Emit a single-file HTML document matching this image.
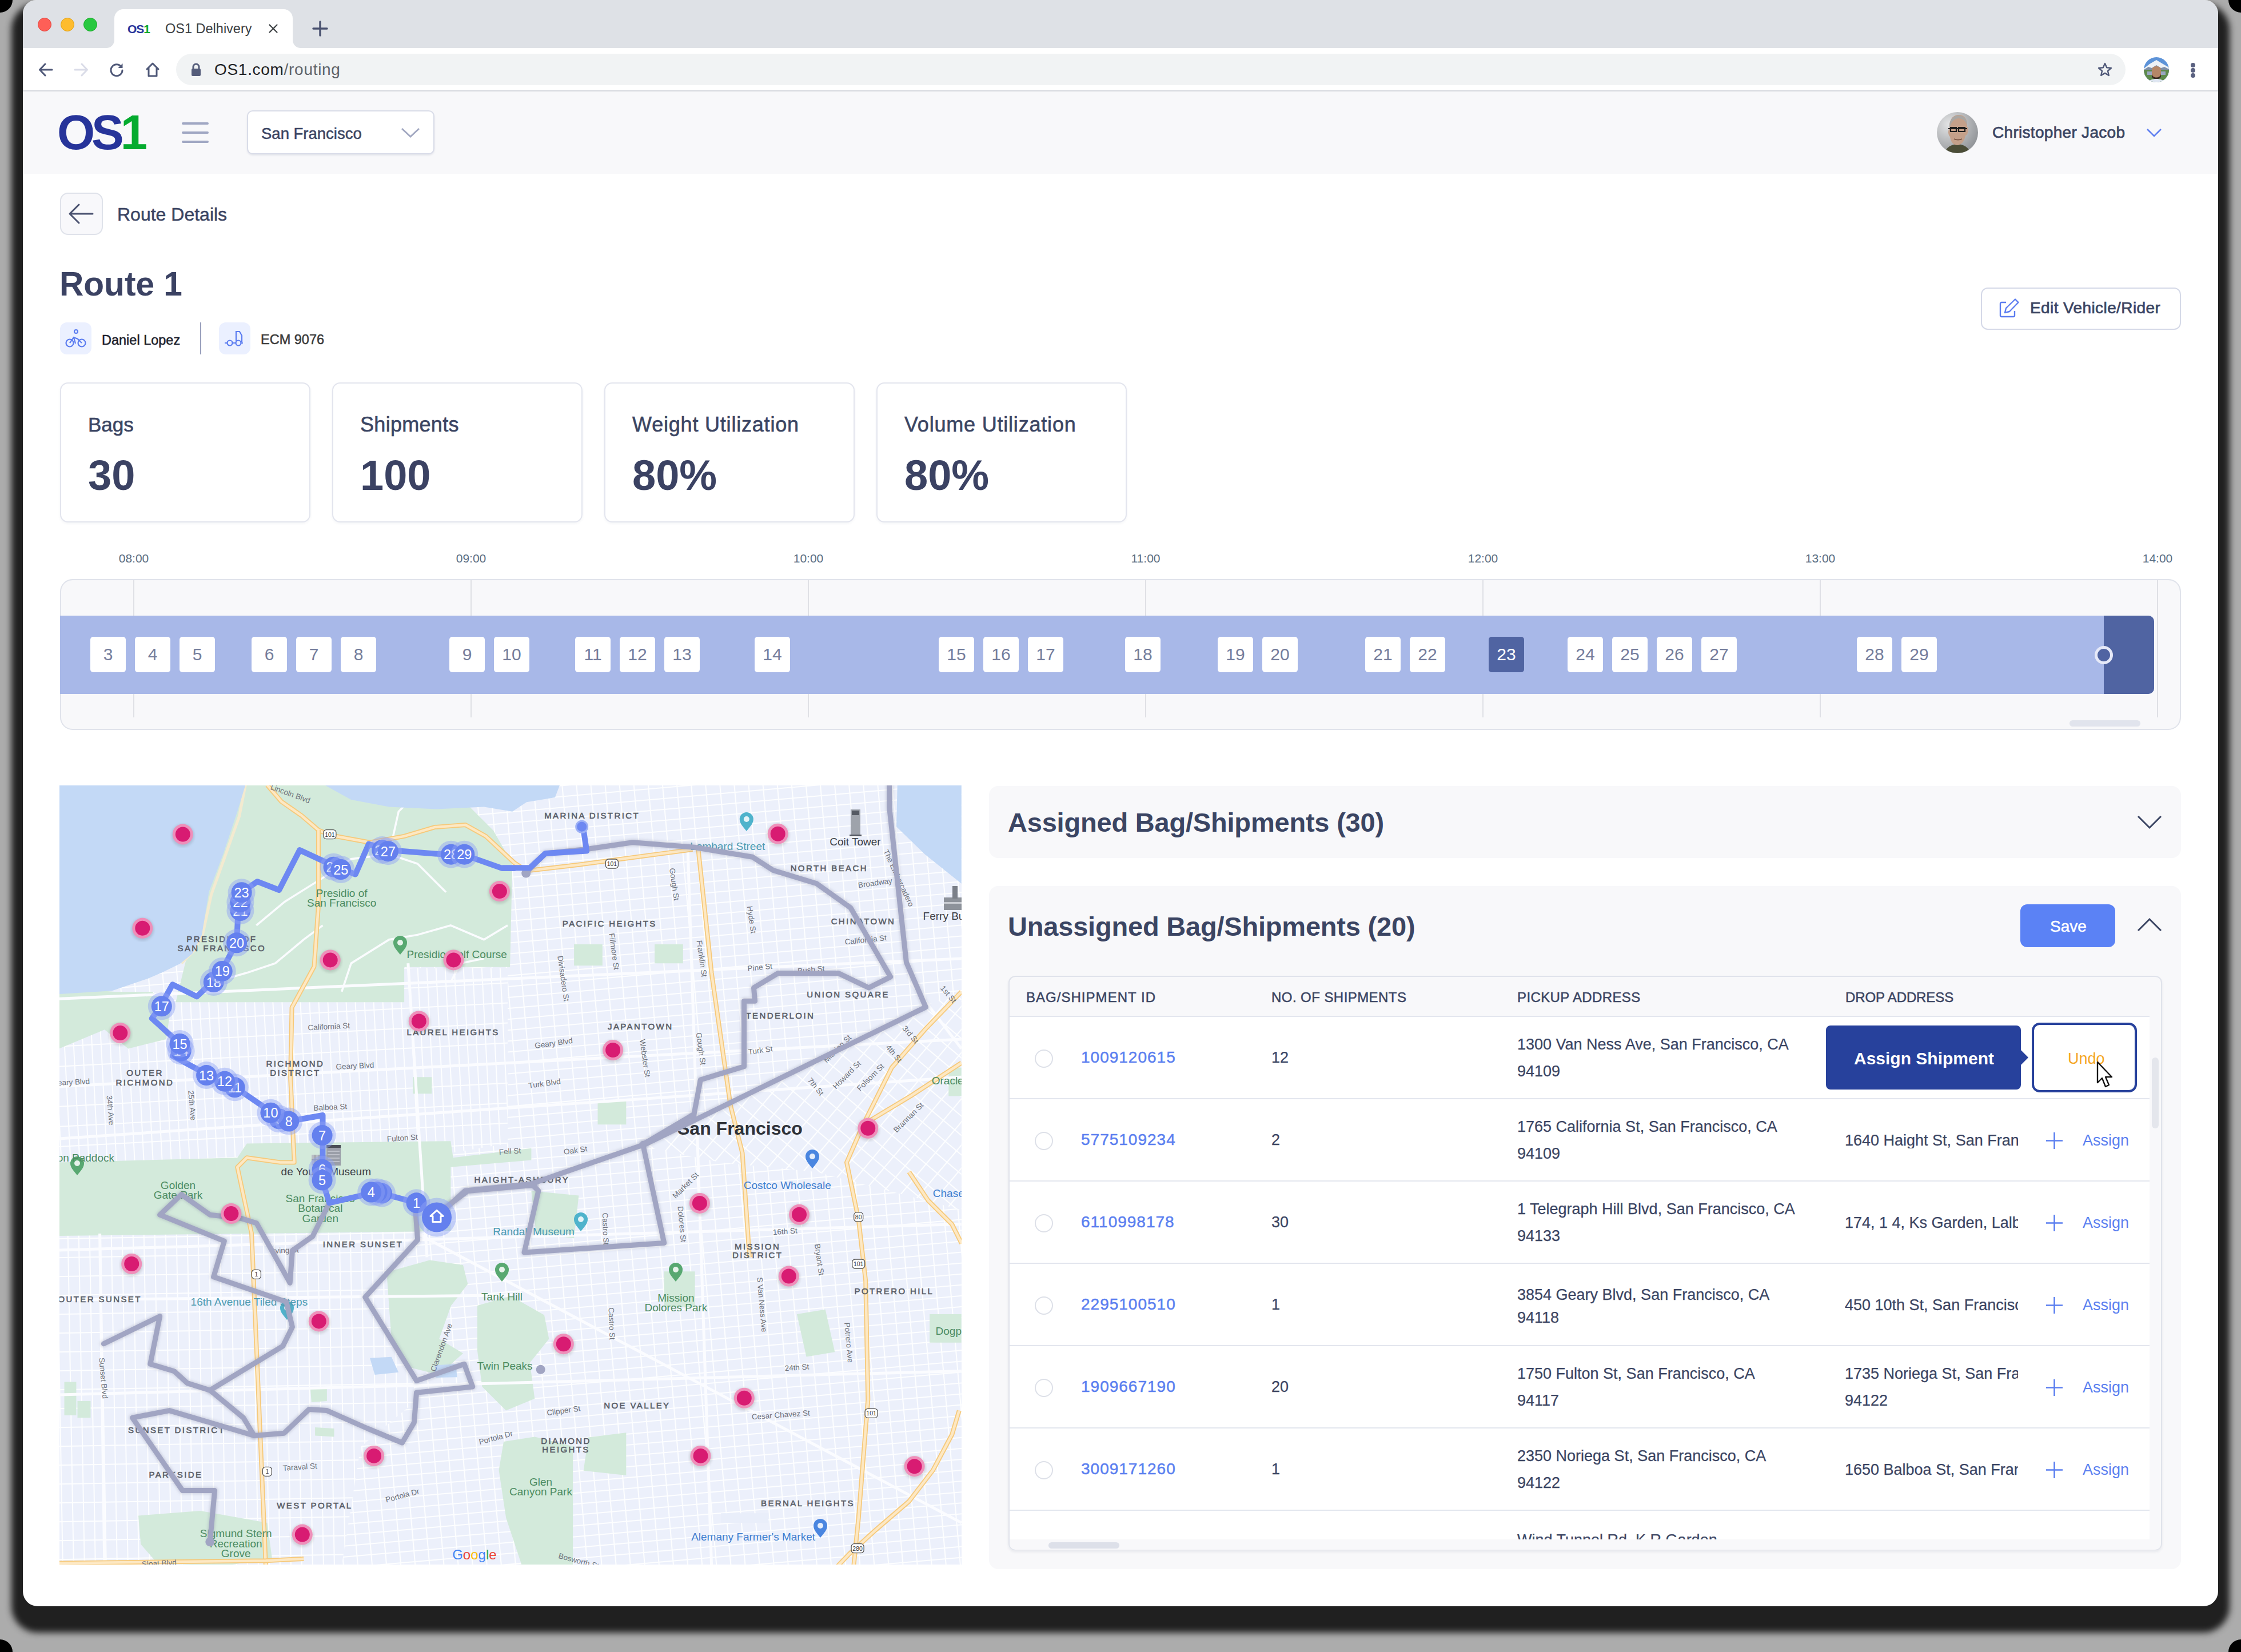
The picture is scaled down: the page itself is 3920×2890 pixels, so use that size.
<!DOCTYPE html>
<html><head><meta charset="utf-8">
<style>
*{box-sizing:border-box;margin:0;padding:0}
html,body{width:3920px;height:2890px;overflow:hidden}
body{position:relative;font-family:"Liberation Sans",sans-serif;background:#acacac;color:#3b4563}
.a{position:absolute}
#shadow{position:absolute;left:40px;top:0;width:3840px;height:2810px;border-radius:26px;background:#111;box-shadow:0 26px 12px 20px #202020}
#win{position:absolute;left:0;top:0;width:3920px;height:2890px;clip-path:inset(0 40px 80px 40px round 24px 24px 26px 26px);background:#fff}
.t{position:absolute;white-space:nowrap;line-height:1}
.m{-webkit-text-stroke:0.5px currentColor}
.card{position:absolute;top:669px;width:438px;height:245px;border:2px solid #e3e5ee;border-radius:14px;background:#fff;box-shadow:0 2px 4px rgba(40,50,90,.05)}
.card .l{-webkit-text-stroke:0.6px currentColor;position:absolute;left:47px;top:52px;font-size:35px;color:#3b4563;white-space:nowrap}
.card .v{position:absolute;left:47px;top:118px;font-size:74px;font-weight:bold;color:#3b4263;white-space:nowrap}
.tl{position:absolute;top:965px;font-size:21px;color:#5b6e82;width:80px;text-align:center;margin-left:-40px}
.gl{position:absolute;top:1015px;width:2px;height:240px;background:#dfe0e5}
.bx{position:absolute;top:1114px;width:62px;height:62px;background:#fff;border-radius:5px;font-size:30px;color:#747d9c;text-align:center;line-height:62px}
.row{position:absolute;left:1766px;width:1994px;height:144px;border-top:2px solid #e3e6ee;background:#fff}
.radio{position:absolute;left:44px;top:57px;width:32px;height:32px;border:2px solid #dde0e8;border-radius:50%}
.rid{-webkit-text-stroke:0.5px currentColor;position:absolute;left:125px;top:57px;font-size:28px;letter-spacing:1px;color:#5b7ff0;white-space:nowrap;line-height:1}
.cnt{-webkit-text-stroke:0.25px currentColor;position:absolute;left:458px;top:58px;font-size:27px;color:#3b4563;white-space:nowrap;line-height:1}
.pa{-webkit-text-stroke:0.25px currentColor;position:absolute;left:888px;top:25px;font-size:27px;color:#3b4563;white-space:nowrap;line-height:47px}
.da{-webkit-text-stroke:0.25px currentColor;position:absolute;left:1461px;top:59px;width:303px;overflow:hidden;font-size:27px;color:#3b4563;white-space:nowrap;line-height:1}
.plus{position:absolute;left:1812px;top:57px;width:31px;height:31px}
.asg{position:absolute;left:1877px;top:59px;font-size:27px;color:#5b7ff0;white-space:nowrap;line-height:1}
</style></head><body>
<div class="a" style="left:-22px;top:-22px;width:44px;height:44px;border-radius:50%;background:#000"></div>
<div class="a" style="left:3898px;top:-22px;width:44px;height:44px;border-radius:50%;background:#000"></div>
<div class="a" style="left:-22px;top:2868px;width:44px;height:44px;border-radius:50%;background:#000"></div>
<div class="a" style="left:3898px;top:2868px;width:44px;height:44px;border-radius:50%;background:#000"></div>
<div id="shadow"></div>
<div id="win">
  <!-- title bar -->
  <div class="a" style="left:0;top:0;width:3920px;height:84px;background:#dee1e6"></div>
  <div class="a" style="left:66px;top:31px;width:24px;height:24px;border-radius:50%;background:#fe5f57;border:1px solid #e2463f"></div>
  <div class="a" style="left:106px;top:31px;width:24px;height:24px;border-radius:50%;background:#febc2e;border:1px solid #e1a116"></div>
  <div class="a" style="left:146px;top:31px;width:24px;height:24px;border-radius:50%;background:#28c840;border:1px solid #1aab29"></div>
  <!-- tab -->
  <div class="a" style="left:200px;top:16px;width:312px;height:70px;background:#fff;border-radius:16px 16px 0 0"></div>
  <svg class="a" style="left:186px;top:70px" width="14" height="14"><path d="M0 14 A14 14 0 0 0 14 0 L14 14 Z" fill="#fff"/></svg>
  <svg class="a" style="left:512px;top:70px" width="14" height="14"><path d="M14 14 A14 14 0 0 1 0 0 L0 14 Z" fill="#fff"/></svg>
  <div class="t" style="left:223px;top:40px;font-size:21px;font-weight:bold;letter-spacing:-1px;color:#27349a">OS<span style="color:#05ab2f">1</span></div>
  <div class="t" style="left:289px;top:39px;font-size:23.5px;color:#3c4043">OS1 Delhivery</div>
  <svg class="a" style="left:468px;top:40px" width="20" height="20"><path d="M3.5 3.5L16.5 16.5M16.5 3.5L3.5 16.5" stroke="#3c4043" stroke-width="2.2" stroke-linecap="round"/></svg>
  <svg class="a" style="left:545px;top:35px" width="30" height="30"><path d="M15 3V27M3 15H27" stroke="#4a5270" stroke-width="3.4" stroke-linecap="round"/></svg>
  <!-- address bar -->
  <div class="a" style="left:0;top:84px;width:3920px;height:75px;background:#fff"></div>
  <div class="a" style="left:0;top:158px;width:3920px;height:2px;background:#d6d8de"></div>
  <svg class="a" style="left:66px;top:108px" width="28" height="28"><path d="M25 14H4M13 4L3.5 14L13 24" fill="none" stroke="#4f5878" stroke-width="3" stroke-linecap="round" stroke-linejoin="round"/></svg>
  <svg class="a" style="left:128px;top:108px" width="28" height="28"><path d="M3 14H24M15 4L24.5 14L15 24" fill="none" stroke="#dadce8" stroke-width="3" stroke-linecap="round" stroke-linejoin="round"/></svg>
  <svg class="a" style="left:190px;top:108px" width="28" height="28"><path d="M22.5 9.5A10 10 0 1 0 24 15" fill="none" stroke="#4f5878" stroke-width="3" stroke-linecap="round"/><path d="M24.5 3V11H16.5Z" fill="#4f5878"/></svg>
  <svg class="a" style="left:252px;top:107px" width="30" height="30"><path d="M5 14L15 4L25 14M8 12V26H22V12" fill="none" stroke="#4f5878" stroke-width="3" stroke-linejoin="round" stroke-linecap="round"/></svg>
  <div class="a" style="left:308px;top:94px;width:3410px;height:55px;border-radius:28px;background:#f1f3f4"></div>
  <svg class="a" style="left:333px;top:109px" width="20" height="26"><path d="M5 11V8A5 5 0 0 1 15 8V11" fill="none" stroke="#545c7a" stroke-width="3"/><rect x="2" y="11" width="16" height="13" rx="2" fill="#545c7a"/></svg>
  <div class="t" style="left:375px;top:108px;font-size:28px;letter-spacing:0.7px;color:#202124">OS1.com<span style="color:#5f6368">/routing</span></div>
  <svg class="a" style="left:3668px;top:108px" width="28" height="28"><path d="M14 3L17.2 10.3L25 11L19 16.2L20.8 24L14 19.9L7.2 24L9 16.2L3 11L10.8 10.3Z" fill="none" stroke="#4f5878" stroke-width="2.4" stroke-linejoin="round"/></svg>
  <svg class="a" style="left:3750px;top:100px" width="44" height="44" viewBox="0 0 44 44"><defs><clipPath id="pfc"><circle cx="22" cy="22" r="22"/></clipPath></defs><g clip-path="url(#pfc)"><rect width="44" height="44" fill="#5d93d8"/><path d="M0 20L10 12L22 5L32 11L44 18V44H0Z" fill="#eef2f7"/><path d="M0 22L8 17L14 19L22 14L30 19L36 17L44 21V44H0Z" fill="#7f8fa8"/><rect y="22" width="44" height="22" fill="#5e8a4c"/><rect x="6" y="25" width="32" height="6" fill="#9aa6c2"/><path d="M14 22C14 14 30 14 30 22V32C30 38 14 38 14 32Z" fill="#b58667"/><path d="M14 28C14 38 30 38 30 28V34C28 40 16 40 14 34Z" fill="#3a2a22"/><path d="M8 44C10 36 34 36 36 44Z" fill="#dfe6f2"/></g></svg>
  <div class="a" style="left:3832px;top:110px;width:8px;height:8px;border-radius:50%;background:#5a6180"></div>
  <div class="a" style="left:3832px;top:119px;width:8px;height:8px;border-radius:50%;background:#5a6180"></div>
  <div class="a" style="left:3832px;top:128px;width:8px;height:8px;border-radius:50%;background:#5a6180"></div>

  <!-- app header -->
  <div class="a" style="left:0;top:160px;width:3920px;height:144px;background:#f8f8fa"></div>
  <div class="t" style="left:100px;top:189px;font-size:85px;font-weight:bold;letter-spacing:-6px;color:#27349a">OS<span style="color:#05ab2f">1</span></div>
  <div class="a" style="left:318px;top:214px;width:47px;height:4px;border-radius:2px;background:#a0a7c3"></div>
  <div class="a" style="left:318px;top:230px;width:47px;height:4px;border-radius:2px;background:#a0a7c3"></div>
  <div class="a" style="left:318px;top:246px;width:47px;height:4px;border-radius:2px;background:#a0a7c3"></div>
  <div class="a" style="left:432px;top:193px;width:328px;height:77px;border:2px solid #d9dce8;border-radius:10px;background:#fff;box-shadow:0 2px 3px rgba(60,70,110,.1)"></div>
  <div class="t m" style="left:457px;top:220px;font-size:27.5px;color:#3b4563">San Francisco</div>
  <svg class="a" style="left:700px;top:222px" width="36" height="20"><path d="M3 3L18 17L33 3" fill="none" stroke="#a3a9c2" stroke-width="3"/></svg>
  <svg class="a" style="left:3388px;top:196px" width="72" height="72" viewBox="0 0 72 72"><defs><radialGradient id="avbg" cx="30%" cy="30%" r="80%"><stop offset="0" stop-color="#e4e5e6"/><stop offset="1" stop-color="#8f9296"/></radialGradient><clipPath id="avc"><circle cx="36" cy="36" r="36"/></clipPath></defs><g clip-path="url(#avc)"><rect width="72" height="72" fill="url(#avbg)"/><path d="M14 72C16 62 24 57 36 56C48 57 56 62 58 72Z" fill="#4b4d37"/><path d="M22 30C21 12 29 5 38 5C48 5 54 12 53 26C55 27 56 31 54 36C53 40 51 41 50 41C48 52 42 58 36 58C29 58 24 52 23 43C21 42 20 38 20 35C20 32 21 30 22 30Z" fill="#c4a08a"/><path d="M22 28C21 14 28 6 38 6C47 6 53 12 53 24C51 17 48 12 38 11C30 12 25 17 22 28Z" fill="#a9a7a4"/><path d="M20 29H53M24 27H34V34H24ZM38 27H49V34H38Z" fill="none" stroke="#1e1e1e" stroke-width="2.2"/><path d="M30 47C34 49 40 49 44 47" stroke="#7a5444" stroke-width="1.8" fill="none"/></g></svg>
  <div class="t" style="left:3485px;top:218px;font-size:28px;letter-spacing:0.3px;-webkit-text-stroke:0.7px #3b4563;color:#3b4563">Christopher Jacob</div>
  <svg class="a" style="left:3754px;top:222px" width="28" height="20"><path d="M2 4L14 16L26 4" fill="none" stroke="#5b7cf0" stroke-width="2.6"/></svg>

  <!-- route details -->
  <div class="a" style="left:105px;top:337px;width:75px;height:74px;border:2px solid #dfe2ea;border-radius:14px;background:#f8f8fb"></div>
  <svg class="a" style="left:118px;top:354px" width="48" height="40"><path d="M44 20H5M20 4L4 20L20 36" fill="none" stroke="#4a5270" stroke-width="3" stroke-linecap="round" stroke-linejoin="round"/></svg>
  <div class="t m" style="left:205px;top:359px;font-size:32px;color:#3b4563">Route Details</div>
  <div class="t" style="left:104px;top:468px;font-size:58.6px;font-weight:bold;color:#3b4263">Route 1</div>
  <div class="a" style="left:105px;top:564px;width:55px;height:56px;border-radius:12px;background:#ebf0ff"></div>
  <svg class="a" style="left:112px;top:574px" width="42" height="36"><g fill="none" stroke="#5b7cf0" stroke-width="2.2"><circle cx="10" cy="26" r="6.5"/><circle cx="31" cy="26" r="6.5"/><circle cx="21" cy="6" r="3"/><path d="M10 26L17 16L24 19L31 26M17 16L20 27"/></g></svg>
  <div class="t m" style="left:178px;top:584px;font-size:23.5px;color:#1b1d2b">Daniel Lopez</div>
  <div class="a" style="left:350px;top:564px;width:2px;height:56px;background:#9aa0bd"></div>
  <div class="a" style="left:383px;top:564px;width:55px;height:56px;border-radius:12px;background:#ebf0ff"></div>
  <svg class="a" style="left:392px;top:578px" width="40" height="30"><g fill="none" stroke="#5b7cf0" stroke-width="2.2"><circle cx="10" cy="22" r="4.5"/><circle cx="25" cy="22" r="4.5"/><path d="M1 22H5.5M14.5 22H20.5M29.5 22H33M21 18V2H27L31 9V20"/></g></svg>
  <div class="t m" style="left:456px;top:583px;font-size:23.5px;color:#3a3a3a">ECM 9076</div>

  <div class="a" style="left:3465px;top:503px;width:350px;height:74px;border:2px solid #d5d9e8;border-radius:12px;background:#fff"></div>
  <svg class="a" style="left:3494px;top:520px" width="40" height="40"><g fill="none" stroke="#5b7cf0" stroke-width="2.4" stroke-linejoin="round"><path d="M15 9H7A2 2 0 0 0 5 11V32A2 2 0 0 0 7 34H28A2 2 0 0 0 30 32V24"/><path d="M13 27L15 19L31 3.5L36.5 9L21 25Z"/></g></svg>
  <div class="t" style="left:3551px;top:525px;font-size:28px;letter-spacing:0.4px;-webkit-text-stroke:0.7px #3b4563;color:#3b4563">Edit Vehicle/Rider</div>

  <!-- cards -->
  <div class="card" style="left:105px"><div class="l">Bags</div><div class="v">30</div></div>
  <div class="card" style="left:581px"><div class="l" style="font-size:36px;top:51px;letter-spacing:0.3px">Shipments</div><div class="v">100</div></div>
  <div class="card" style="left:1057px"><div class="l" style="font-size:36px;top:51px;letter-spacing:0.8px">Weight Utilization</div><div class="v">80%</div></div>
  <div class="card" style="left:1533px"><div class="l" style="font-size:36px;top:51px;letter-spacing:0.8px">Volume Utilization</div><div class="v">80%</div></div>

  <!-- timeline -->
  <div class="tl" style="left:234px">08:00</div>
  <div class="tl" style="left:824px">09:00</div>
  <div class="tl" style="left:1414px">10:00</div>
  <div class="tl" style="left:2004px">11:00</div>
  <div class="tl" style="left:2594px">12:00</div>
  <div class="tl" style="left:3184px">13:00</div>
  <div class="tl" style="left:3774px">14:00</div>
  <div class="a" style="left:105px;top:1013px;width:3710px;height:264px;border:2px solid #e0e3eb;border-radius:22px;background:#f8f8fa;overflow:hidden">
  </div>
  <div class="gl" style="left:233px"></div><div class="gl" style="left:823px"></div><div class="gl" style="left:1413px"></div><div class="gl" style="left:2003px"></div><div class="gl" style="left:2593px"></div><div class="gl" style="left:3183px"></div><div class="gl" style="left:3773px"></div>
  <div class="a" style="left:105px;top:1077px;width:3663px;height:137px;background:#a8b8e8;border-radius:0 10px 10px 0"></div>
  <div class="a" style="left:3680px;top:1077px;width:88px;height:137px;background:#5064a2;border-radius:0 10px 10px 0"></div>
  <div class="a" style="left:3664px;top:1130px;width:32px;height:32px;border-radius:50%;background:#5064a2;border:5px solid #e6e9f8"></div>
  <div class="a" style="left:3620px;top:1260px;width:124px;height:11px;border-radius:6px;background:#e1e4ed"></div>
  <div class="bx" style="left:158px">3</div><div class="bx" style="left:236px">4</div><div class="bx" style="left:314px">5</div>
  <div class="bx" style="left:440px">6</div><div class="bx" style="left:518px">7</div><div class="bx" style="left:596px">8</div>
  <div class="bx" style="left:786px">9</div><div class="bx" style="left:864px">10</div>
  <div class="bx" style="left:1006px">11</div><div class="bx" style="left:1084px">12</div><div class="bx" style="left:1162px">13</div>
  <div class="bx" style="left:1320px">14</div>
  <div class="bx" style="left:1642px">15</div><div class="bx" style="left:1720px">16</div><div class="bx" style="left:1798px">17</div>
  <div class="bx" style="left:1968px">18</div>
  <div class="bx" style="left:2130px">19</div><div class="bx" style="left:2208px">20</div>
  <div class="bx" style="left:2388px">21</div><div class="bx" style="left:2466px">22</div>
  <div class="bx" style="left:2604px;background:#5064a2;color:#fff">23</div>
  <div class="bx" style="left:2742px">24</div><div class="bx" style="left:2820px">25</div><div class="bx" style="left:2898px">26</div><div class="bx" style="left:2976px">27</div>
  <div class="bx" style="left:3248px">28</div><div class="bx" style="left:3326px">29</div>

  <!-- MAP -->
  <div id="map" class="a" style="left:104px;top:1374px;width:1578px;height:1363px;background:#e9eef8;overflow:hidden">
<svg width="1578" height="1363" viewBox="0 0 1578 1363" style="position:absolute;left:0;top:0">
<defs>
<pattern id="g1" width="25" height="19" patternUnits="userSpaceOnUse" patternTransform="rotate(-5)"><rect width="25" height="19" fill="#ecf0fb"/><path d="M0 1H25M1 0V19" stroke="#fdfeff" stroke-width="2.2"/></pattern>
<pattern id="g2" width="16" height="35" patternUnits="userSpaceOnUse" patternTransform="rotate(-3)"><rect width="16" height="35" fill="#ecf0fb"/><path d="M0 1H16M1 0V35" stroke="#fdfeff" stroke-width="2"/></pattern>
<pattern id="g3" width="26" height="26" patternUnits="userSpaceOnUse" patternTransform="rotate(40)"><rect width="26" height="26" fill="#ecf0fb"/><path d="M0 1H26M1 0V26" stroke="#fdfeff" stroke-width="2.2"/></pattern>
<pattern id="g4" width="19" height="33" patternUnits="userSpaceOnUse" patternTransform="rotate(-1)"><rect width="19" height="33" fill="#ecf0fb"/><path d="M0 1H19M1 0V33" stroke="#fdfeff" stroke-width="2"/></pattern>
<filter id="sh" x="-5%" y="-5%" width="110%" height="110%"><feGaussianBlur stdDeviation="2"/></filter>
</defs>
<rect width="1578" height="1363" fill="url(#g1)"/>
<path d="M-0.7 360.9 L593.2 360.9 L593.2 319.5 L784.0 319.5 L784.0 626.4 L684.4 642.9 L-0.7 659.5Z" fill="url(#g2)"/>
<path d="M-0.7 775.7 L626.4 775.7 L576.6 908.4 L626.4 1074.2 L526.8 1157.2 L493.7 1364.5 L-0.7 1364.5Z" fill="url(#g4)"/>
<path d="M1016.2 630.5 L1513.8 385.8 L1577.7 360.9 L1577.7 742.5 L1323.1 676.1 L1157.2 659.5Z" fill="url(#g3)"/>
<path d="M244.8 -0.7 L576.6 -0.7 L709.3 29.2 L759.1 78.9 L792.2 137.0 L788.1 317.8 L603.1 317.8 L603.1 379.2 L203.4 379.2 L219.9 311.2 L244.8 236.5 L286.3 112.1 L315.3 29.2Z" fill="#d3eadb"/>
<path d="M-0.7 352.7 L95.5 360.9 L161.9 360.9 L195.1 385.8 L186.8 443.9 L120.4 460.5 L78.9 427.3 L-0.7 460.5Z" fill="#d3eadb"/>
<path d="M-0.7 659.5 L311.2 651.2 L327.8 626.4 L684.4 622.2 L688.6 651.2 L825.4 634.7 L825.4 655.4 L684.4 667.8 L684.4 779.8 L-0.7 788.1Z" fill="#d3eadb"/>
<path d="M572.3 851.4 L647.5 830.5 L706.0 838.9 L714.3 872.3 L685.1 909.9 L664.2 968.3 L706.0 993.4 L664.2 1031.0 L614.1 1018.5 L580.7 968.3 L576.5 909.9Z" fill="#d3eadb"/>
<path d="M731.0 909.9 L789.5 893.2 L848.0 926.6 L856.3 968.3 L822.9 1010.1 L831.3 1072.8 L781.2 1093.6 L739.4 1051.9 L731.0 989.2Z" fill="#d3eadb"/>
<path d="M777.0 1147.9 L831.3 1139.6 L898.1 1156.3 L898.1 1369.3 L810.4 1369.3 L781.2 1281.6 L768.6 1198.1Z" fill="#d3eadb"/>
<path d="M138.0 1277.4 L246.6 1269.1 L363.5 1289.9 L371.9 1352.6 L288.3 1365.1 L171.4 1360.9 L142.2 1327.5Z" fill="#d3eadb"/>
<path d="M438.7 1051.9 L467.9 1056.1 L467.9 1076.9 L440.8 1079.0Z" fill="#d3eadb"/>
<path d="M447.1 1122.9 L480.5 1125.0 L480.5 1139.6 L447.1 1137.5Z" fill="#d3eadb"/>
<path d="M8.5 1043.5 L29.4 1043.5 L29.4 1102.0 L8.5 1102.0Z" fill="#d3eadb"/>
<path d="M31.5 1076.9 L54.5 1076.9 L54.5 1106.2 L31.5 1106.2Z" fill="#d3eadb"/>
<path d="M825.4 709.3 L908.4 717.6 L900.1 792.2 L833.7 784.0Z" fill="#d3eadb"/>
<path d="M1057.7 850.3 L1111.6 850.3 L1111.6 912.5 L1057.7 912.5Z" fill="#d3eadb"/>
<path d="M900.1 278.0 L949.8 278.0 L949.8 315.3 L900.1 315.3Z" fill="#d3eadb"/>
<path d="M1041.1 278.0 L1090.8 278.0 L1090.8 311.2 L1041.1 311.2Z" fill="#d3eadb"/>
<path d="M941.5 551.7 L991.3 551.7 L991.3 593.2 L941.5 593.2Z" fill="#d3eadb"/>
<path d="M618.1 510.2 L651.2 510.2 L651.2 539.3 L618.1 539.3Z" fill="#d3eadb"/>
<path d="M925.0 1140.6 L991.3 1132.3 L991.3 1207.0 L916.7 1198.7Z" fill="#d3eadb"/>
<path d="M1522.1 925.0 L1577.7 925.0 L1577.7 974.7 L1522.1 974.7Z" fill="#d3eadb"/>
<path d="M460.5 -0.7 L543.4 -0.7 L543.4 45.8 L460.5 45.8Z" fill="#d3eadb"/>
<path d="M1555.3 493.7 L1577.7 493.7 L1577.7 543.4 L1555.3 543.4Z" fill="#d3eadb"/>
<path d="M1289.9 925.0 L1339.7 916.7 L1356.3 991.3 L1306.5 999.6Z" fill="#d3eadb"/>
<path d="M325.3 -0.7 L314.5 54.1 L288.0 128.7 L265.6 190.9 L250.6 259.8 L236.5 288.0 L213.3 311.2" stroke="#f3ead0" stroke-width="5" fill="none"/>
<path d="M344.4 244.8 L394.1 203.4 L460.5 161.9 L510.2 128.7 L576.6 120.4 L626.4 137.0 L676.1 186.8" stroke="#fbfcff" stroke-width="3.5" fill="none"/>
<path d="M493.7 360.9 L510.2 311.2 L576.6 269.7 L626.4 261.4 L684.4 244.8 L742.5 269.7 L784.0 244.8" stroke="#fbfcff" stroke-width="3.5" fill="none"/>
<path d="M269.7 344.4 L327.8 327.8 L377.5 311.2 L427.3 269.7 L460.5 244.8" stroke="#fbfcff" stroke-width="3.5" fill="none"/>
<path d="M576.6 120.4 L593.2 45.8 L626.4 12.6" stroke="#fbfcff" stroke-width="3.5" fill="none"/>
<path d="M684.4 344.4 L701.0 311.2 L742.5 302.9" stroke="#fbfcff" stroke-width="3.5" fill="none"/>
<path d="M-0.7 -0.7 L325.3 -0.7 L311.2 45.8 L286.3 120.4 L261.4 186.8 L249.0 261.4 L232.4 294.6 L210.8 312.0 L178.5 327.8 L155.2 337.7 L92.2 359.3 L-0.7 365.1Z" fill="#c3d9f6"/>
<path d="M463.8 -0.7 L875.2 -0.7 L866.9 20.9 L817.1 29.2 L792.2 45.8 L742.5 37.5 L659.5 41.6 L576.6 37.5 L510.2 25.0Z" fill="#c3d9f6"/>
<path d="M1465.7 -0.7 L1577.7 -0.7 L1577.7 171.8 L1513.8 120.4 L1464.1 72.3Z" fill="#c3d9f6"/>
<path d="M1157.2 1273.3 L1240.1 1273.3 L1240.1 1289.9 L1157.2 1289.9Z" fill="#e9eefa"/>
<path d="M543.1 1001.8 L580.7 999.7 L593.2 1026.8 L551.5 1031.0Z" fill="#c3d9f6"/>
<path d="M655.9 1014.3 L693.5 1012.2 L695.5 1035.2 L658.0 1036.0Z" fill="#c3d9f6"/>
<path d="M-0.7 373.4 L1577.7 302.9" stroke="#fbfcff" stroke-width="5" fill="none"/>
<path d="M-0.7 526.8 L1577.7 443.9" stroke="#fbfcff" stroke-width="5" fill="none"/>
<path d="M-0.7 618.1 L1577.7 510.2" stroke="#fbfcff" stroke-width="5" fill="none"/>
<path d="M-0.7 813.0 L1577.7 767.4" stroke="#fbfcff" stroke-width="5" fill="none"/>
<path d="M-0.7 900.1 L792.2 891.8" stroke="#fbfcff" stroke-width="5" fill="none"/>
<path d="M-0.7 1066.0 L1577.7 1024.5" stroke="#fbfcff" stroke-width="5" fill="none"/>
<path d="M70.6 784.0 L78.9 1364.5" stroke="#fbfcff" stroke-width="5" fill="none"/>
<path d="M609.8 311.2 L642.9 825.4" stroke="#fbfcff" stroke-width="5" fill="none"/>
<path d="M1099.1 112.1 L1140.6 1364.5" stroke="#fbfcff" stroke-width="5" fill="none"/>
<path d="M1489.0 344.4 L1577.7 460.5" stroke="#fbfcff" stroke-width="5" fill="none"/>
<path d="M626.4 784.0 L1577.7 1289.9" stroke="#fbfcff" stroke-width="5" fill="none"/>
<path d="M363.4 -0.7 L388.3 28.3 L424.0 53.2 L453.0 78.1 L474.6 87.2 L542.6 99.7 L603.1 88.9 L656.2 73.1 L710.1 69.0 L745.8 88.9 L795.6 135.3 L817.1 149.4 L908.4 138.7 L1107.4 112.1" stroke="#f6c97a" stroke-width="8" fill="none" stroke-linejoin="round"/>
<path d="M363.4 -0.7 L388.3 28.3 L424.0 53.2 L453.0 78.1 L474.6 87.2 L542.6 99.7 L603.1 88.9 L656.2 73.1 L710.1 69.0 L745.8 88.9 L795.6 135.3 L817.1 149.4 L908.4 138.7 L1107.4 112.1" stroke="#fde8c3" stroke-width="4.5" fill="none" stroke-linejoin="round"/>
<path d="M1117.4 112.1 L1140.6 327.8 L1173.8 560.0 L1194.5 642.9 L1207.0 825.4" stroke="#f6c97a" stroke-width="8" fill="none" stroke-linejoin="round"/>
<path d="M1117.4 112.1 L1140.6 327.8 L1173.8 560.0 L1194.5 642.9 L1207.0 825.4" stroke="#fde8c3" stroke-width="4.5" fill="none" stroke-linejoin="round"/>
<path d="M453.0 78.1 L453.0 210.0 L445.5 317.0 L406.6 388.3 L404.1 510.2 L410.7 659.5 L385.8 659.5 L327.8 651.2 L311.2 667.8 L336.1 784.0 L360.9 1364.5" stroke="#f6c97a" stroke-width="8" fill="none" stroke-linejoin="round"/>
<path d="M453.0 78.1 L453.0 210.0 L445.5 317.0 L406.6 388.3 L404.1 510.2 L410.7 659.5 L385.8 659.5 L327.8 651.2 L311.2 667.8 L336.1 784.0 L360.9 1364.5" stroke="#fde8c3" stroke-width="4.5" fill="none" stroke-linejoin="round"/>
<path d="M1577.7 485.4 L1489.0 543.4 L1406.0 593.2 L1377.0 659.5 L1397.7 759.1 L1410.2 866.9 L1414.3 1074.2 L1397.7 1281.6 L1389.4 1364.5" stroke="#f6c97a" stroke-width="8" fill="none" stroke-linejoin="round"/>
<path d="M1577.7 485.4 L1489.0 543.4 L1406.0 593.2 L1377.0 659.5 L1397.7 759.1 L1410.2 866.9 L1414.3 1074.2 L1397.7 1281.6 L1389.4 1364.5" stroke="#fde8c3" stroke-width="4.5" fill="none" stroke-linejoin="round"/>
<path d="M1573.8 1093.7 L1561.3 1135.5 L1527.9 1198.1 L1486.1 1252.4 L1427.6 1302.6 L1381.7 1344.3 L1360.8 1366.1" stroke="#f6c97a" stroke-width="8" fill="none" stroke-linejoin="round"/>
<path d="M1573.8 1093.7 L1561.3 1135.5 L1527.9 1198.1 L1486.1 1252.4 L1427.6 1302.6 L1381.7 1344.3 L1360.8 1366.1" stroke="#fde8c3" stroke-width="4.5" fill="none" stroke-linejoin="round"/>
<path d="M1486.1 676.0 L1519.5 726.1 L1561.3 767.9 L1578.0 801.3" stroke="#f6c97a" stroke-width="8" fill="none" stroke-linejoin="round"/>
<path d="M1486.1 676.0 L1519.5 726.1 L1561.3 767.9 L1578.0 801.3" stroke="#fde8c3" stroke-width="4.5" fill="none" stroke-linejoin="round"/>
<path d="M1577.7 360.9 L1513.8 427.3 L1455.8 493.7 L1406.0 593.2" stroke="#f6c97a" stroke-width="8" fill="none" stroke-linejoin="round"/>
<path d="M1577.7 360.9 L1513.8 427.3 L1455.8 493.7 L1406.0 593.2" stroke="#fde8c3" stroke-width="4.5" fill="none" stroke-linejoin="round"/>
<path d="M-0.7 1360.4 L360.9 1356.3 L427.3 1352.9" stroke="#f6c97a" stroke-width="8" fill="none" stroke-linejoin="round"/>
<path d="M-0.7 1360.4 L360.9 1356.3 L427.3 1352.9" stroke="#fde8c3" stroke-width="4.5" fill="none" stroke-linejoin="round"/>
<g><rect x="467" y="629" width="25" height="36" fill="#9a9ea8"/><rect x="467" y="629" width="25" height="5" fill="#4a4e57"/><path d="M469 640H490M469 646H490M469 652H490M469 658H490" stroke="#c9ccd3" stroke-width="1.5"/><rect x="441" y="646" width="26" height="19" fill="#b9bcc4"/><path d="M447 646V665M454 646V665M461 646V665M441 655H467" stroke="#8d9199" stroke-width="1.3"/></g>
<path d="M1201.8 80.0 c-8 -10 -12 -14 -12 -21 a12 12 0 1 1 24 0 c0 7 -4 11 -12 21z" fill="#4fb3cc"/>
<circle cx="1201.8" cy="59.0" r="5" fill="#fff" fill-opacity=".85"/>
<path d="M596.0 296.0 c-8 -10 -12 -14 -12 -21 a12 12 0 1 1 24 0 c0 7 -4 11 -12 21z" fill="#58a871"/>
<circle cx="596.0" cy="275.0" r="5" fill="#fff" fill-opacity=".85"/>
<path d="M774.0 868.0 c-8 -10 -12 -14 -12 -21 a12 12 0 1 1 24 0 c0 7 -4 11 -12 21z" fill="#58a871"/>
<circle cx="774.0" cy="847.0" r="5" fill="#fff" fill-opacity=".85"/>
<path d="M1078.0 868.0 c-8 -10 -12 -14 -12 -21 a12 12 0 1 1 24 0 c0 7 -4 11 -12 21z" fill="#58a871"/>
<circle cx="1078.0" cy="847.0" r="5" fill="#fff" fill-opacity=".85"/>
<path d="M31.0 682.0 c-8 -10 -12 -14 -12 -21 a12 12 0 1 1 24 0 c0 7 -4 11 -12 21z" fill="#58a871"/>
<circle cx="31.0" cy="661.0" r="5" fill="#fff" fill-opacity=".85"/>
<path d="M912.0 780.0 c-8 -10 -12 -14 -12 -21 a12 12 0 1 1 24 0 c0 7 -4 11 -12 21z" fill="#4fb3cc"/>
<circle cx="912.0" cy="759.0" r="5" fill="#fff" fill-opacity=".85"/>
<path d="M1317.0 670.0 c-8 -10 -12 -14 -12 -21 a12 12 0 1 1 24 0 c0 7 -4 11 -12 21z" fill="#4a86e0"/>
<circle cx="1317.0" cy="649.0" r="5" fill="#fff" fill-opacity=".85"/>
<path d="M1331.0 1316.0 c-8 -10 -12 -14 -12 -21 a12 12 0 1 1 24 0 c0 7 -4 11 -12 21z" fill="#4a86e0"/>
<circle cx="1331.0" cy="1295.0" r="5" fill="#fff" fill-opacity=".85"/>
<path d="M398.0 935.0 c-8 -10 -12 -14 -12 -21 a12 12 0 1 1 24 0 c0 7 -4 11 -12 21z" fill="#4fb3cc"/>
<circle cx="398.0" cy="914.0" r="5" fill="#fff" fill-opacity=".85"/>
<text x="471.3" y="426.5" font-size="13.5" fill="#6d717a" text-anchor="middle" font-family="Liberation Sans" transform="rotate(-3 471.3 421.5)">California St</text>
<text x="516.9" y="495.3" font-size="13.5" fill="#6d717a" text-anchor="middle" font-family="Liberation Sans" transform="rotate(-3 516.9 490.3)">Geary Blvd</text>
<text x="473.7" y="567.5" font-size="13.5" fill="#6d717a" text-anchor="middle" font-family="Liberation Sans" transform="rotate(-3 473.7 562.5)">Balboa St</text>
<text x="599.8" y="621.4" font-size="13.5" fill="#6d717a" text-anchor="middle" font-family="Liberation Sans" transform="rotate(-4 599.8 616.4)">Fulton St</text>
<text x="788.1" y="644.6" font-size="13.5" fill="#6d717a" text-anchor="middle" font-family="Liberation Sans" transform="rotate(-4 788.1 639.6)">Fell St</text>
<text x="902.6" y="643.0" font-size="13.5" fill="#6d717a" text-anchor="middle" font-family="Liberation Sans" transform="rotate(-8 902.6 638.0)">Oak St</text>
<text x="848.6" y="526.0" font-size="13.5" fill="#6d717a" text-anchor="middle" font-family="Liberation Sans" transform="rotate(-8 848.6 521.0)">Turk Blvd</text>
<text x="864.4" y="455.5" font-size="13.5" fill="#6d717a" text-anchor="middle" font-family="Liberation Sans" transform="rotate(-8 864.4 450.5)">Geary Blvd</text>
<text x="1410.2" y="274.7" font-size="13.5" fill="#6d717a" text-anchor="middle" font-family="Liberation Sans" transform="rotate(-6 1410.2 269.7)">California St</text>
<text x="1225.2" y="322.8" font-size="13.5" fill="#6d717a" text-anchor="middle" font-family="Liberation Sans" transform="rotate(-6 1225.2 317.8)">Pine St</text>
<text x="1314.8" y="327.0" font-size="13.5" fill="#6d717a" text-anchor="middle" font-family="Liberation Sans" transform="rotate(-6 1314.8 322.0)">Bush St</text>
<text x="1226.0" y="468.0" font-size="13.5" fill="#6d717a" text-anchor="middle" font-family="Liberation Sans" transform="rotate(-8 1226.0 463.0)">Turk St</text>
<text x="1426.8" y="175.2" font-size="13.5" fill="#6d717a" text-anchor="middle" font-family="Liberation Sans" transform="rotate(-8 1426.8 170.2)">Broadway</text>
<text x="1075.9" y="177.7" font-size="13.5" fill="#6d717a" text-anchor="middle" font-family="Liberation Sans" transform="rotate(82 1075.9 172.7)">Gough St</text>
<text x="1211.1" y="239.9" font-size="13.5" fill="#6d717a" text-anchor="middle" font-family="Liberation Sans" transform="rotate(82 1211.1 234.9)">Hyde St</text>
<text x="970.6" y="295.4" font-size="13.5" fill="#6d717a" text-anchor="middle" font-family="Liberation Sans" transform="rotate(82 970.6 290.4)">Fillmore St</text>
<text x="881.8" y="342.7" font-size="13.5" fill="#6d717a" text-anchor="middle" font-family="Liberation Sans" transform="rotate(82 881.8 337.7)">Divisadero St</text>
<text x="1124.0" y="307.9" font-size="13.5" fill="#6d717a" text-anchor="middle" font-family="Liberation Sans" transform="rotate(82 1124.0 302.9)">Franklin St</text>
<text x="1024.5" y="482.1" font-size="13.5" fill="#6d717a" text-anchor="middle" font-family="Liberation Sans" transform="rotate(82 1024.5 477.1)">Webster St</text>
<text x="1122.4" y="465.5" font-size="13.5" fill="#6d717a" text-anchor="middle" font-family="Liberation Sans" transform="rotate(82 1122.4 460.5)">Gough St</text>
<text x="955.6" y="780.7" font-size="13.5" fill="#6d717a" text-anchor="middle" font-family="Liberation Sans" transform="rotate(88 955.6 775.7)">Castro St</text>
<text x="1089.2" y="772.4" font-size="13.5" fill="#6d717a" text-anchor="middle" font-family="Liberation Sans" transform="rotate(85 1089.2 767.4)">Dolores St</text>
<text x="1229.3" y="913.4" font-size="13.5" fill="#6d717a" text-anchor="middle" font-family="Liberation Sans" transform="rotate(85 1229.3 908.4)">S Van Ness Ave</text>
<text x="1329.7" y="834.6" font-size="13.5" fill="#6d717a" text-anchor="middle" font-family="Liberation Sans" transform="rotate(82 1329.7 829.6)">Bryant St</text>
<text x="1381.1" y="979.7" font-size="13.5" fill="#6d717a" text-anchor="middle" font-family="Liberation Sans" transform="rotate(85 1381.1 974.7)">Potrero Ave</text>
<text x="966.4" y="946.5" font-size="13.5" fill="#6d717a" text-anchor="middle" font-family="Liberation Sans" transform="rotate(88 966.4 941.5)">Castro St</text>
<text x="1269.2" y="784.8" font-size="13.5" fill="#6d717a" text-anchor="middle" font-family="Liberation Sans" transform="rotate(-4 1269.2 779.8)">16th St</text>
<text x="1289.9" y="1022.8" font-size="13.5" fill="#6d717a" text-anchor="middle" font-family="Liberation Sans" transform="rotate(-4 1289.9 1017.8)">24th St</text>
<text x="1261.7" y="1105.8" font-size="13.5" fill="#6d717a" text-anchor="middle" font-family="Liberation Sans" transform="rotate(-4 1261.7 1100.8)">Cesar Chavez St</text>
<text x="881.8" y="1098.3" font-size="13.5" fill="#6d717a" text-anchor="middle" font-family="Liberation Sans" transform="rotate(-8 881.8 1093.3)">Clipper St</text>
<text x="763.2" y="1145.6" font-size="13.5" fill="#6d717a" text-anchor="middle" font-family="Liberation Sans" transform="rotate(-15 763.2 1140.6)">Portola Dr</text>
<text x="599.8" y="1246.8" font-size="13.5" fill="#6d717a" text-anchor="middle" font-family="Liberation Sans" transform="rotate(-15 599.8 1241.8)">Portola Dr</text>
<text x="420.7" y="1197.0" font-size="13.5" fill="#6d717a" text-anchor="middle" font-family="Liberation Sans" transform="rotate(-4 420.7 1192.0)">Taraval St</text>
<text x="77.3" y="1041.9" font-size="13.5" fill="#6d717a" text-anchor="middle" font-family="Liberation Sans" transform="rotate(85 77.3 1036.9)">Sunset Blvd</text>
<text x="89.7" y="573.3" font-size="13.5" fill="#6d717a" text-anchor="middle" font-family="Liberation Sans" transform="rotate(85 89.7 568.3)">34th Ave</text>
<text x="232.4" y="565.0" font-size="13.5" fill="#6d717a" text-anchor="middle" font-family="Liberation Sans" transform="rotate(85 232.4 560.0)">25th Ave</text>
<text x="667.8" y="988.0" font-size="13.5" fill="#6d717a" text-anchor="middle" font-family="Liberation Sans" transform="rotate(-70 667.8 983.0)">Clarendon Ave</text>
<text x="1095.0" y="704.3" font-size="13.5" fill="#6d717a" text-anchor="middle" font-family="Liberation Sans" transform="rotate(-45 1095.0 699.3)">Market St</text>
<text x="1360.4" y="465.5" font-size="13.5" fill="#6d717a" text-anchor="middle" font-family="Liberation Sans" transform="rotate(-45 1360.4 460.5)">Mission St</text>
<text x="1377.0" y="511.1" font-size="13.5" fill="#6d717a" text-anchor="middle" font-family="Liberation Sans" transform="rotate(-45 1377.0 506.1)">Howard St</text>
<text x="1418.5" y="515.2" font-size="13.5" fill="#6d717a" text-anchor="middle" font-family="Liberation Sans" transform="rotate(-45 1418.5 510.2)">Folsom St</text>
<text x="1323.1" y="531.8" font-size="13.5" fill="#6d717a" text-anchor="middle" font-family="Liberation Sans" transform="rotate(50 1323.1 526.8)">7th St</text>
<text x="1489.0" y="440.6" font-size="13.5" fill="#6d717a" text-anchor="middle" font-family="Liberation Sans" transform="rotate(50 1489.0 435.6)">3rd St</text>
<text x="1459.9" y="473.8" font-size="13.5" fill="#6d717a" text-anchor="middle" font-family="Liberation Sans" transform="rotate(50 1459.9 468.8)">4th St</text>
<text x="1555.3" y="370.1" font-size="13.5" fill="#6d717a" text-anchor="middle" font-family="Liberation Sans" transform="rotate(50 1555.3 365.1)">1st St</text>
<text x="1484.8" y="585.7" font-size="13.5" fill="#6d717a" text-anchor="middle" font-family="Liberation Sans" transform="rotate(-45 1484.8 580.7)">Brannan St</text>
<text x="1468.2" y="166.9" font-size="13.5" fill="#6d717a" text-anchor="middle" font-family="Liberation Sans" transform="rotate(65 1468.2 161.9)">The Embarcadero</text>
<text x="404.1" y="19.2" font-size="13.5" fill="#6d717a" text-anchor="middle" font-family="Liberation Sans" transform="rotate(20 404.1 14.2)">Lincoln Blvd</text>
<text x="174.3" y="1365.4" font-size="13.5" fill="#6d717a" text-anchor="middle" font-family="Liberation Sans" transform="rotate(-3 174.3 1360.4)">Sloat Blvd</text>
<text x="908.4" y="1361.3" font-size="13.5" fill="#6d717a" text-anchor="middle" font-family="Liberation Sans" transform="rotate(15 908.4 1356.3)">Bosworth St</text>
<text x="394.1" y="818.0" font-size="13.5" fill="#6d717a" text-anchor="middle" font-family="Liberation Sans" transform="rotate(-3 394.1 813.0)">Irving St</text>
<text x="25.0" y="523.5" font-size="13.5" fill="#6d717a" text-anchor="middle" font-family="Liberation Sans" transform="rotate(-3 25.0 518.5)">eary Blvd</text>
<rect x="461.9" y="77.6" width="22" height="16" rx="5" fill="#fff" stroke="#555" stroke-width="1.3"/>
<text x="472.9" y="89.6" font-size="10.5" fill="#333" text-anchor="middle" font-family="Liberation Sans">101</text>
<rect x="955.4" y="129.0" width="22" height="16" rx="5" fill="#fff" stroke="#555" stroke-width="1.3"/>
<text x="966.4" y="141.0" font-size="10.5" fill="#333" text-anchor="middle" font-family="Liberation Sans">101</text>
<rect x="336.4" y="847.3" width="16" height="16" rx="5" fill="#fff" stroke="#555" stroke-width="1.3"/>
<text x="344.4" y="859.3" font-size="10.5" fill="#333" text-anchor="middle" font-family="Liberation Sans">1</text>
<rect x="355.4" y="1192.3" width="16" height="16" rx="5" fill="#fff" stroke="#555" stroke-width="1.3"/>
<text x="363.4" y="1204.3" font-size="10.5" fill="#333" text-anchor="middle" font-family="Liberation Sans">1</text>
<rect x="1389.7" y="746.9" width="16" height="16" rx="5" fill="#fff" stroke="#555" stroke-width="1.3"/>
<text x="1397.7" y="758.9" font-size="10.5" fill="#333" text-anchor="middle" font-family="Liberation Sans">80</text>
<rect x="1386.7" y="829.0" width="22" height="16" rx="5" fill="#fff" stroke="#555" stroke-width="1.3"/>
<text x="1397.7" y="841.0" font-size="10.5" fill="#333" text-anchor="middle" font-family="Liberation Sans">101</text>
<rect x="1409.1" y="1090.3" width="22" height="16" rx="5" fill="#fff" stroke="#555" stroke-width="1.3"/>
<text x="1420.1" y="1102.3" font-size="10.5" fill="#333" text-anchor="middle" font-family="Liberation Sans">101</text>
<rect x="1385.1" y="1326.7" width="22" height="16" rx="5" fill="#fff" stroke="#555" stroke-width="1.3"/>
<text x="1396.1" y="1338.7" font-size="10.5" fill="#333" text-anchor="middle" font-family="Liberation Sans">280</text>
<g fill="#9ea3ab"><rect x="1384" y="42" width="17" height="45"/><rect x="1382" y="86" width="21" height="3" fill="#555a63"/><rect x="1386" y="44" width="13" height="8" fill="#555a63"/></g>
<g><rect x="1547" y="196" width="34" height="22" fill="#8d929a"/><rect x="1562" y="176" width="9" height="22" fill="#7a7f88"/><rect x="1547" y="204" width="34" height="3" fill="#c9ccd2"/></g>
<path d="M1205 1386a14 14 0 1 1 .1 0z" fill="none"/>
<text x="931.6" y="57.6" font-size="15" fill="#585c66" letter-spacing="2.4" font-weight="normal" text-anchor="middle" font-family="Liberation Sans" stroke="#585c66" stroke-width="0.55">MARINA DISTRICT</text>
<text x="962.3" y="246.7" font-size="15" fill="#585c66" letter-spacing="2.4" font-weight="normal" text-anchor="middle" font-family="Liberation Sans" stroke="#585c66" stroke-width="0.55">PACIFIC HEIGHTS</text>
<text x="1346.3" y="149.6" font-size="15" fill="#585c66" letter-spacing="2.4" font-weight="normal" text-anchor="middle" font-family="Liberation Sans" stroke="#585c66" stroke-width="0.55">NORTH BEACH</text>
<text x="1406.0" y="242.5" font-size="15" fill="#585c66" letter-spacing="2.4" font-weight="normal" text-anchor="middle" font-family="Liberation Sans" stroke="#585c66" stroke-width="0.55">CHINATOWN</text>
<text x="1379.5" y="371.1" font-size="15" fill="#585c66" letter-spacing="2.4" font-weight="normal" text-anchor="middle" font-family="Liberation Sans" stroke="#585c66" stroke-width="0.55">UNION SQUARE</text>
<text x="1260.9" y="408.4" font-size="15" fill="#585c66" letter-spacing="2.4" font-weight="normal" text-anchor="middle" font-family="Liberation Sans" stroke="#585c66" stroke-width="0.55">TENDERLOIN</text>
<text x="1016.2" y="426.7" font-size="15" fill="#585c66" letter-spacing="2.4" font-weight="normal" text-anchor="middle" font-family="Liberation Sans" stroke="#585c66" stroke-width="0.55">JAPANTOWN</text>
<text x="688.6" y="436.6" font-size="15" fill="#585c66" letter-spacing="2.4" font-weight="normal" text-anchor="middle" font-family="Liberation Sans" stroke="#585c66" stroke-width="0.55">LAUREL HEIGHTS</text>
<text x="283.8" y="274.1" font-size="15" fill="#585c66" letter-spacing="2.4" font-weight="normal" text-anchor="middle" font-family="Liberation Sans" stroke="#585c66" stroke-width="0.55">PRESIDIO OF</text>
<text x="283.8" y="289.8" font-size="15" fill="#585c66" letter-spacing="2.4" font-weight="normal" text-anchor="middle" font-family="Liberation Sans" stroke="#585c66" stroke-width="0.55">SAN FRANCISCO</text>
<text x="149.4" y="507.9" font-size="15" fill="#585c66" letter-spacing="2.4" font-weight="normal" text-anchor="middle" font-family="Liberation Sans" stroke="#585c66" stroke-width="0.55">OUTER</text>
<text x="149.4" y="524.5" font-size="15" fill="#585c66" letter-spacing="2.4" font-weight="normal" text-anchor="middle" font-family="Liberation Sans" stroke="#585c66" stroke-width="0.55">RICHMOND</text>
<text x="412.4" y="492.2" font-size="15" fill="#585c66" letter-spacing="2.4" font-weight="normal" text-anchor="middle" font-family="Liberation Sans" stroke="#585c66" stroke-width="0.55">RICHMOND</text>
<text x="412.4" y="507.9" font-size="15" fill="#585c66" letter-spacing="2.4" font-weight="normal" text-anchor="middle" font-family="Liberation Sans" stroke="#585c66" stroke-width="0.55">DISTRICT</text>
<text x="808.8" y="694.6" font-size="15" fill="#585c66" letter-spacing="2.4" font-weight="normal" text-anchor="middle" font-family="Liberation Sans" stroke="#585c66" stroke-width="0.55">HAIGHT-ASHBURY</text>
<text x="531.0" y="808.2" font-size="15" fill="#585c66" letter-spacing="2.4" font-weight="normal" text-anchor="middle" font-family="Liberation Sans" stroke="#585c66" stroke-width="0.55">INNER SUNSET</text>
<text x="70.6" y="904.4" font-size="15" fill="#585c66" letter-spacing="2.4" font-weight="normal" text-anchor="middle" font-family="Liberation Sans" stroke="#585c66" stroke-width="0.55">OUTER SUNSET</text>
<text x="1221.1" y="811.5" font-size="15" fill="#585c66" letter-spacing="2.4" font-weight="normal" text-anchor="middle" font-family="Liberation Sans" stroke="#585c66" stroke-width="0.55">MISSION</text>
<text x="1221.1" y="827.3" font-size="15" fill="#585c66" letter-spacing="2.4" font-weight="normal" text-anchor="middle" font-family="Liberation Sans" stroke="#585c66" stroke-width="0.55">DISTRICT</text>
<text x="1459.9" y="889.5" font-size="15" fill="#585c66" letter-spacing="2.4" font-weight="normal" text-anchor="middle" font-family="Liberation Sans" stroke="#585c66" stroke-width="0.55">POTRERO HILL</text>
<text x="1010.4" y="1090.2" font-size="15" fill="#585c66" letter-spacing="2.4" font-weight="normal" text-anchor="middle" font-family="Liberation Sans" stroke="#585c66" stroke-width="0.55">NOE VALLEY</text>
<text x="886.0" y="1151.6" font-size="15" fill="#585c66" letter-spacing="2.4" font-weight="normal" text-anchor="middle" font-family="Liberation Sans" stroke="#585c66" stroke-width="0.55">DIAMOND</text>
<text x="886.0" y="1166.5" font-size="15" fill="#585c66" letter-spacing="2.4" font-weight="normal" text-anchor="middle" font-family="Liberation Sans" stroke="#585c66" stroke-width="0.55">HEIGHTS</text>
<text x="205.0" y="1132.5" font-size="15" fill="#585c66" letter-spacing="2.4" font-weight="normal" text-anchor="middle" font-family="Liberation Sans" stroke="#585c66" stroke-width="0.55">SUNSET DISTRICT</text>
<text x="203.4" y="1210.5" font-size="15" fill="#585c66" letter-spacing="2.4" font-weight="normal" text-anchor="middle" font-family="Liberation Sans" stroke="#585c66" stroke-width="0.55">PARKSIDE</text>
<text x="446.4" y="1265.2" font-size="15" fill="#585c66" letter-spacing="2.4" font-weight="normal" text-anchor="middle" font-family="Liberation Sans" stroke="#585c66" stroke-width="0.55">WEST PORTAL</text>
<text x="1309.0" y="1261.1" font-size="15" fill="#585c66" letter-spacing="2.4" font-weight="normal" text-anchor="middle" font-family="Liberation Sans" stroke="#585c66" stroke-width="0.55">BERNAL HEIGHTS</text>
<text x="493.7" y="194.6" font-size="19" fill="#4c8c62" letter-spacing="0" font-weight="normal" text-anchor="middle" font-family="Liberation Sans" stroke="#4c8c62" stroke-width="0">Presidio of</text>
<text x="493.7" y="212.0" font-size="19" fill="#4c8c62" letter-spacing="0" font-weight="normal" text-anchor="middle" font-family="Liberation Sans" stroke="#4c8c62" stroke-width="0">San Francisco</text>
<text x="695.2" y="301.6" font-size="19" fill="#4c8c62" letter-spacing="0" font-weight="normal" text-anchor="middle" font-family="Liberation Sans" stroke="#4c8c62" stroke-width="0">Presidio Golf Course</text>
<text x="207.5" y="705.5" font-size="19" fill="#4c8c62" letter-spacing="0" font-weight="normal" text-anchor="middle" font-family="Liberation Sans" stroke="#4c8c62" stroke-width="0">Golden</text>
<text x="207.5" y="722.9" font-size="19" fill="#4c8c62" letter-spacing="0" font-weight="normal" text-anchor="middle" font-family="Liberation Sans" stroke="#4c8c62" stroke-width="0">Gate Park</text>
<text x="456.3" y="728.7" font-size="19" fill="#4c8c62" letter-spacing="0" font-weight="normal" text-anchor="middle" font-family="Liberation Sans" stroke="#4c8c62" stroke-width="0">San Francisco</text>
<text x="456.3" y="746.2" font-size="19" fill="#4c8c62" letter-spacing="0" font-weight="normal" text-anchor="middle" font-family="Liberation Sans" stroke="#4c8c62" stroke-width="0">Botanical</text>
<text x="456.3" y="763.6" font-size="19" fill="#4c8c62" letter-spacing="0" font-weight="normal" text-anchor="middle" font-family="Liberation Sans" stroke="#4c8c62" stroke-width="0">Garden</text>
<text x="774.0" y="901.3" font-size="19" fill="#4c8c62" letter-spacing="0" font-weight="normal" text-anchor="middle" font-family="Liberation Sans" stroke="#4c8c62" stroke-width="0">Tank Hill</text>
<text x="1078.4" y="902.9" font-size="19" fill="#4c8c62" letter-spacing="0" font-weight="normal" text-anchor="middle" font-family="Liberation Sans" stroke="#4c8c62" stroke-width="0">Mission</text>
<text x="1078.4" y="920.3" font-size="19" fill="#4c8c62" letter-spacing="0" font-weight="normal" text-anchor="middle" font-family="Liberation Sans" stroke="#4c8c62" stroke-width="0">Dolores Park</text>
<text x="779.0" y="1022.4" font-size="19" fill="#4c8c62" letter-spacing="0" font-weight="normal" text-anchor="middle" font-family="Liberation Sans" stroke="#4c8c62" stroke-width="0">Twin Peaks</text>
<text x="842.0" y="1224.7" font-size="19" fill="#4c8c62" letter-spacing="0" font-weight="normal" text-anchor="middle" font-family="Liberation Sans" stroke="#4c8c62" stroke-width="0">Glen</text>
<text x="842.0" y="1242.2" font-size="19" fill="#4c8c62" letter-spacing="0" font-weight="normal" text-anchor="middle" font-family="Liberation Sans" stroke="#4c8c62" stroke-width="0">Canyon Park</text>
<text x="308.7" y="1315.1" font-size="19" fill="#4c8c62" letter-spacing="0" font-weight="normal" text-anchor="middle" font-family="Liberation Sans" stroke="#4c8c62" stroke-width="0">Sigmund Stern</text>
<text x="308.7" y="1332.6" font-size="19" fill="#4c8c62" letter-spacing="0" font-weight="normal" text-anchor="middle" font-family="Liberation Sans" stroke="#4c8c62" stroke-width="0">Recreation</text>
<text x="308.7" y="1350.0" font-size="19" fill="#4c8c62" letter-spacing="0" font-weight="normal" text-anchor="middle" font-family="Liberation Sans" stroke="#4c8c62" stroke-width="0">Grove</text>
<text x="45.8" y="658.2" font-size="19" fill="#4c8c62" letter-spacing="0" font-weight="normal" text-anchor="middle" font-family="Liberation Sans" stroke="#4c8c62" stroke-width="0">on Paddock</text>
<text x="1553.7" y="523.0" font-size="19" fill="#4c8c62" letter-spacing="0" font-weight="normal" text-anchor="middle" font-family="Liberation Sans" stroke="#4c8c62" stroke-width="0">Oracle</text>
<text x="331.9" y="909.6" font-size="19" fill="#4b9bb3" letter-spacing="0" font-weight="normal" text-anchor="middle" font-family="Liberation Sans" stroke="#4b9bb3" stroke-width="0">16th Avenue Tiled Steps</text>
<text x="1168.8" y="113.3" font-size="19" fill="#4b9bb3" letter-spacing="0" font-weight="normal" text-anchor="middle" font-family="Liberation Sans" stroke="#4b9bb3" stroke-width="0">Lombard Street</text>
<text x="829.6" y="786.8" font-size="19" fill="#4b9bb3" letter-spacing="0" font-weight="normal" text-anchor="middle" font-family="Liberation Sans" stroke="#4b9bb3" stroke-width="0">Randall Museum</text>
<text x="1273.3" y="706.3" font-size="19" fill="#3f7fd0" letter-spacing="0" font-weight="normal" text-anchor="middle" font-family="Liberation Sans" stroke="#3f7fd0" stroke-width="0">Costco Wholesale</text>
<text x="1213.6" y="1321.0" font-size="19" fill="#3f7fd0" letter-spacing="0" font-weight="normal" text-anchor="middle" font-family="Liberation Sans" stroke="#3f7fd0" stroke-width="0">Alemany Farmer's Market</text>
<text x="1555.3" y="719.6" font-size="19" fill="#3f7fd0" letter-spacing="0" font-weight="normal" text-anchor="middle" font-family="Liberation Sans" stroke="#3f7fd0" stroke-width="0">Chase</text>
<text x="466.3" y="681.5" font-size="19" fill="#3c3f47" letter-spacing="0" font-weight="normal" text-anchor="middle" font-family="Liberation Sans" stroke="#3c3f47" stroke-width="0">de Young Museum</text>
<text x="1391.9" y="105.0" font-size="19" fill="#3c3f47" letter-spacing="0" font-weight="normal" text-anchor="middle" font-family="Liberation Sans" stroke="#3c3f47" stroke-width="0">Coit Tower</text>
<text x="1547.0" y="235.2" font-size="19" fill="#3c3f47" letter-spacing="0" font-weight="normal" text-anchor="middle" font-family="Liberation Sans" stroke="#3c3f47" stroke-width="0">Ferry Bu</text>
<text x="1555.3" y="961.0" font-size="19" fill="#4c8c62" letter-spacing="0" font-weight="normal" text-anchor="middle" font-family="Liberation Sans" stroke="#4c8c62" stroke-width="0">Dogp</text>
<text x="1190.4" y="610.8" font-size="32" fill="#2e3138" letter-spacing="0" font-weight="bold" text-anchor="middle" font-family="Liberation Sans" stroke="#2e3138" stroke-width="0">San Francisco</text>
<path d="M816.2 153.6 L824.7 144.3 L850.1 118.9 L924.3 111.2 L1002.6 99.8 L1110.7 108.3 L1212.3 125.2 L1248.4 148.5 L1324.6 171.8 L1383.9 214.2 L1453.8 334.9 L1415.7 354.0 L1362.7 328.6 L1256.8 328.6 L1214.5 354.0 L1216.6 377.3 L1197.5 377.3 L1197.5 491.7 L1121.3 515.0 L1108.6 582.7" stroke="#7d819c" stroke-opacity=".25" stroke-width="13" fill="none" stroke-linejoin="round" stroke-linecap="round" filter="url(#sh)"/>
<path d="M1451.7 -2.3 L1451.7 38.4 L1481.4 309.5 L1515.3 387.9 L1025.9 627.2" stroke="#7d819c" stroke-opacity=".25" stroke-width="13" fill="none" stroke-linejoin="round" stroke-linecap="round" filter="url(#sh)"/>
<path d="M1107.4 576.6 L1016.2 630.5 L825.4 696.9 L709.3 709.3 L659.5 754.9" stroke="#7d819c" stroke-opacity=".25" stroke-width="13" fill="none" stroke-linejoin="round" stroke-linecap="round" filter="url(#sh)"/>
<path d="M825.4 696.9 L837.9 709.3 L813.0 817.1 L1057.7 800.5 L1020.3 626.4" stroke="#7d819c" stroke-opacity=".25" stroke-width="13" fill="none" stroke-linejoin="round" stroke-linecap="round" filter="url(#sh)"/>
<path d="M77.4 976.7 L175.6 928.7 L158.9 1012.2 L200.6 1024.7 L223.6 1045.6 L263.3 1058.1 L390.7 980.9 L407.4 947.5 L396.9 903.6 L269.6 859.8 L288.3 797.1 L175.6 751.2 L213.2 715.7 L263.3 751.2 L317.6 757.4 L344.7 765.8 L403.2 870.2 L407.4 813.8 L442.9 788.8 L472.1 730.3" stroke="#7d819c" stroke-opacity=".25" stroke-width="13" fill="none" stroke-linejoin="round" stroke-linecap="round" filter="url(#sh)"/>
<path d="M263.3 1058.1 L321.8 1106.2 L340.6 1137.5 L192.3 1093.6 L127.6 1106.2 L215.3 1233.6 L271.6 1233.6 L263.3 1323.3" stroke="#7d819c" stroke-opacity=".25" stroke-width="13" fill="none" stroke-linejoin="round" stroke-linecap="round" filter="url(#sh)"/>
<path d="M340.6 1137.5 L392.8 1133.3 L436.6 1091.6 L467.9 1093.6 L538.9 1125.0 L599.5 1150.0 L620.4 1114.5 L624.5 1062.3 L722.7 1051.9 L708.1 1012.2 L624.5 1041.4 L534.8 895.3 L626.6 795.0 L622.5 738.6" stroke="#7d819c" stroke-opacity=".25" stroke-width="13" fill="none" stroke-linejoin="round" stroke-linecap="round" filter="url(#sh)"/>
<path d="M664.2 747.0 L714.3 709.4 L831.3 699.0" stroke="#7d819c" stroke-opacity=".25" stroke-width="13" fill="none" stroke-linejoin="round" stroke-linecap="round" filter="url(#sh)"/>
<path d="M816.2 153.6 L824.7 144.3 L850.1 118.9 L924.3 111.2 L1002.6 99.8 L1110.7 108.3 L1212.3 125.2 L1248.4 148.5 L1324.6 171.8 L1383.9 214.2 L1453.8 334.9 L1415.7 354.0 L1362.7 328.6 L1256.8 328.6 L1214.5 354.0 L1216.6 377.3 L1197.5 377.3 L1197.5 491.7 L1121.3 515.0 L1108.6 582.7" stroke="#a1a5c3" stroke-width="9" fill="none" stroke-linejoin="round" stroke-linecap="round"/>
<path d="M1451.7 -2.3 L1451.7 38.4 L1481.4 309.5 L1515.3 387.9 L1025.9 627.2" stroke="#a1a5c3" stroke-width="9" fill="none" stroke-linejoin="round" stroke-linecap="round"/>
<path d="M1107.4 576.6 L1016.2 630.5 L825.4 696.9 L709.3 709.3 L659.5 754.9" stroke="#a1a5c3" stroke-width="9" fill="none" stroke-linejoin="round" stroke-linecap="round"/>
<path d="M825.4 696.9 L837.9 709.3 L813.0 817.1 L1057.7 800.5 L1020.3 626.4" stroke="#a1a5c3" stroke-width="9" fill="none" stroke-linejoin="round" stroke-linecap="round"/>
<path d="M77.4 976.7 L175.6 928.7 L158.9 1012.2 L200.6 1024.7 L223.6 1045.6 L263.3 1058.1 L390.7 980.9 L407.4 947.5 L396.9 903.6 L269.6 859.8 L288.3 797.1 L175.6 751.2 L213.2 715.7 L263.3 751.2 L317.6 757.4 L344.7 765.8 L403.2 870.2 L407.4 813.8 L442.9 788.8 L472.1 730.3" stroke="#a1a5c3" stroke-width="9" fill="none" stroke-linejoin="round" stroke-linecap="round"/>
<path d="M263.3 1058.1 L321.8 1106.2 L340.6 1137.5 L192.3 1093.6 L127.6 1106.2 L215.3 1233.6 L271.6 1233.6 L263.3 1323.3" stroke="#a1a5c3" stroke-width="9" fill="none" stroke-linejoin="round" stroke-linecap="round"/>
<path d="M340.6 1137.5 L392.8 1133.3 L436.6 1091.6 L467.9 1093.6 L538.9 1125.0 L599.5 1150.0 L620.4 1114.5 L624.5 1062.3 L722.7 1051.9 L708.1 1012.2 L624.5 1041.4 L534.8 895.3 L626.6 795.0 L622.5 738.6" stroke="#a1a5c3" stroke-width="9" fill="none" stroke-linejoin="round" stroke-linecap="round"/>
<path d="M664.2 747.0 L714.3 709.4 L831.3 699.0" stroke="#a1a5c3" stroke-width="9" fill="none" stroke-linejoin="round" stroke-linecap="round"/>
<circle cx="816.2" cy="153.6" r="8" fill="#a1a5c3"/>
<circle cx="263.3" cy="1323.3" r="8" fill="#a1a5c3"/>
<circle cx="841.7" cy="1021.8" r="8" fill="#a1a5c3"/>
<path d="M460.5 685.9 L460.5 613.0 L460.5 577.0 L401.2 587.6 L369.4 570.6 L308.0 528.3 L257.1 505.0 L197.8 473.2 L210.5 452.0 L161.8 407.5 L176.6 386.3 L197.8 348.2 L240.2 369.4 L269.8 341.9 L284.7 322.8 L310.1 274.1 L312.2 227.5 L318.6 187.2 L346.1 168.2 L384.2 183.0 L420.2 113.1 L479.5 140.6 L517.7 155.5 L541.0 102.5 L574.9 113.1 L685.0 121.6 L708.3 121.6 L774.0 144.9 L796.0 144.9" stroke="#6d88f2" stroke-width="10" fill="none" stroke-linejoin="round" stroke-linecap="round"/>
<path d="M776.0 144.3 L822.6 144.3 L850.1 118.9 L922.2 114.6 L915.8 72.3" stroke="#6d88f2" stroke-width="10" fill="none" stroke-linejoin="round" stroke-linecap="round"/>
<path d="M459.6 690.6 L472.1 730.3 L526.4 717.8 L545.2 711.5 L564.0 713.6 L624.5 730.3 L660.0 755.4" stroke="#6d88f2" stroke-width="10" fill="none" stroke-linejoin="round" stroke-linecap="round"/>
<circle cx="913.7" cy="72.3" r="10" fill="#6d88f2" stroke="#9cb0f5" stroke-width="3"/>
<circle cx="316.4" cy="219.0" r="24" fill="#8ea2f3" fill-opacity=".45"/>
<circle cx="316.4" cy="219.0" r="18" fill="#6480ee"/>
<text x="316.4" y="227.5" font-size="23.5" fill="#fff" text-anchor="middle" font-family="Liberation Sans">21</text>
<circle cx="316.4" cy="204.2" r="24" fill="#8ea2f3" fill-opacity=".45"/>
<circle cx="316.4" cy="204.2" r="18" fill="#6480ee"/>
<text x="316.4" y="212.7" font-size="23.5" fill="#fff" text-anchor="middle" font-family="Liberation Sans">22</text>
<circle cx="318.6" cy="187.2" r="24" fill="#8ea2f3" fill-opacity=".45"/>
<circle cx="318.6" cy="187.2" r="18" fill="#6480ee"/>
<text x="318.6" y="195.7" font-size="23.5" fill="#fff" text-anchor="middle" font-family="Liberation Sans">23</text>
<circle cx="310.1" cy="275.3" r="24" fill="#8ea2f3" fill-opacity=".45"/>
<circle cx="310.1" cy="275.3" r="18" fill="#6480ee"/>
<text x="310.1" y="283.8" font-size="23.5" fill="#fff" text-anchor="middle" font-family="Liberation Sans">20</text>
<circle cx="269.8" cy="344.0" r="24" fill="#8ea2f3" fill-opacity=".45"/>
<circle cx="269.8" cy="344.0" r="18" fill="#6480ee"/>
<text x="269.8" y="352.5" font-size="23.5" fill="#fff" text-anchor="middle" font-family="Liberation Sans">18</text>
<circle cx="284.7" cy="324.9" r="24" fill="#8ea2f3" fill-opacity=".45"/>
<circle cx="284.7" cy="324.9" r="18" fill="#6480ee"/>
<text x="284.7" y="333.4" font-size="23.5" fill="#fff" text-anchor="middle" font-family="Liberation Sans">19</text>
<circle cx="178.8" cy="386.3" r="24" fill="#8ea2f3" fill-opacity=".45"/>
<circle cx="178.8" cy="386.3" r="18" fill="#6480ee"/>
<text x="178.8" y="394.8" font-size="23.5" fill="#fff" text-anchor="middle" font-family="Liberation Sans">17</text>
<circle cx="212.6" cy="464.7" r="24" fill="#8ea2f3" fill-opacity=".45"/>
<circle cx="212.6" cy="464.7" r="18" fill="#6480ee"/>
<text x="212.6" y="473.2" font-size="23.5" fill="#fff" text-anchor="middle" font-family="Liberation Sans">14</text>
<circle cx="210.5" cy="452.0" r="24" fill="#8ea2f3" fill-opacity=".45"/>
<circle cx="210.5" cy="452.0" r="18" fill="#6480ee"/>
<text x="210.5" y="460.5" font-size="23.5" fill="#fff" text-anchor="middle" font-family="Liberation Sans">15</text>
<circle cx="306.7" cy="528.3" r="24" fill="#8ea2f3" fill-opacity=".45"/>
<circle cx="306.7" cy="528.3" r="18" fill="#6480ee"/>
<text x="306.7" y="536.8" font-size="23.5" fill="#fff" text-anchor="middle" font-family="Liberation Sans">11</text>
<circle cx="288.9" cy="517.7" r="24" fill="#8ea2f3" fill-opacity=".45"/>
<circle cx="288.9" cy="517.7" r="18" fill="#6480ee"/>
<text x="288.9" y="526.2" font-size="23.5" fill="#fff" text-anchor="middle" font-family="Liberation Sans">12</text>
<circle cx="257.1" cy="507.1" r="24" fill="#8ea2f3" fill-opacity=".45"/>
<circle cx="257.1" cy="507.1" r="18" fill="#6480ee"/>
<text x="257.1" y="515.6" font-size="23.5" fill="#fff" text-anchor="middle" font-family="Liberation Sans">13</text>
<circle cx="384.2" cy="583.3" r="24" fill="#8ea2f3" fill-opacity=".45"/>
<circle cx="384.2" cy="583.3" r="18" fill="#6480ee"/>
<text x="384.2" y="591.8" font-size="23.5" fill="#fff" text-anchor="middle" font-family="Liberation Sans">9</text>
<circle cx="401.2" cy="587.6" r="24" fill="#8ea2f3" fill-opacity=".45"/>
<circle cx="401.2" cy="587.6" r="18" fill="#6480ee"/>
<text x="401.2" y="596.1" font-size="23.5" fill="#fff" text-anchor="middle" font-family="Liberation Sans">8</text>
<circle cx="369.4" cy="572.7" r="24" fill="#8ea2f3" fill-opacity=".45"/>
<circle cx="369.4" cy="572.7" r="18" fill="#6480ee"/>
<text x="369.4" y="581.2" font-size="23.5" fill="#fff" text-anchor="middle" font-family="Liberation Sans">10</text>
<circle cx="459.6" cy="612.1" r="24" fill="#8ea2f3" fill-opacity=".45"/>
<circle cx="459.6" cy="612.1" r="18" fill="#6480ee"/>
<text x="459.6" y="620.6" font-size="23.5" fill="#fff" text-anchor="middle" font-family="Liberation Sans">7</text>
<circle cx="479.5" cy="142.7" r="24" fill="#8ea2f3" fill-opacity=".45"/>
<circle cx="479.5" cy="142.7" r="18" fill="#6480ee"/>
<text x="479.5" y="151.2" font-size="23.5" fill="#fff" text-anchor="middle" font-family="Liberation Sans">24</text>
<circle cx="492.2" cy="147.0" r="24" fill="#8ea2f3" fill-opacity=".45"/>
<circle cx="492.2" cy="147.0" r="18" fill="#6480ee"/>
<text x="492.2" y="155.5" font-size="23.5" fill="#fff" text-anchor="middle" font-family="Liberation Sans">25</text>
<circle cx="564.3" cy="113.1" r="24" fill="#8ea2f3" fill-opacity=".45"/>
<circle cx="564.3" cy="113.1" r="18" fill="#6480ee"/>
<text x="564.3" y="121.6" font-size="23.5" fill="#fff" text-anchor="middle" font-family="Liberation Sans">26</text>
<circle cx="574.9" cy="115.2" r="24" fill="#8ea2f3" fill-opacity=".45"/>
<circle cx="574.9" cy="115.2" r="18" fill="#6480ee"/>
<text x="574.9" y="123.7" font-size="23.5" fill="#fff" text-anchor="middle" font-family="Liberation Sans">27</text>
<circle cx="685.0" cy="120.7" r="24" fill="#8ea2f3" fill-opacity=".45"/>
<circle cx="685.0" cy="120.7" r="18" fill="#6480ee"/>
<text x="685.0" y="129.2" font-size="23.5" fill="#fff" text-anchor="middle" font-family="Liberation Sans">28</text>
<circle cx="708.3" cy="120.7" r="24" fill="#8ea2f3" fill-opacity=".45"/>
<circle cx="708.3" cy="120.7" r="18" fill="#6480ee"/>
<text x="708.3" y="129.2" font-size="23.5" fill="#fff" text-anchor="middle" font-family="Liberation Sans">29</text>
<circle cx="459.6" cy="671.8" r="24" fill="#8ea2f3" fill-opacity=".45"/>
<circle cx="459.6" cy="671.8" r="18" fill="#6480ee"/>
<text x="459.6" y="680.3" font-size="23.5" fill="#fff" text-anchor="middle" font-family="Liberation Sans">6</text>
<circle cx="459.6" cy="690.6" r="24" fill="#8ea2f3" fill-opacity=".45"/>
<circle cx="459.6" cy="690.6" r="18" fill="#6480ee"/>
<text x="459.6" y="699.1" font-size="23.5" fill="#fff" text-anchor="middle" font-family="Liberation Sans">5</text>
<circle cx="564.0" cy="713.6" r="24" fill="#8ea2f3" fill-opacity=".45"/>
<circle cx="564.0" cy="713.6" r="18" fill="#6480ee"/>
<text x="564.0" y="722.1" font-size="23.5" fill="#fff" text-anchor="middle" font-family="Liberation Sans">2</text>
<circle cx="555.6" cy="711.5" r="24" fill="#8ea2f3" fill-opacity=".45"/>
<circle cx="555.6" cy="711.5" r="18" fill="#6480ee"/>
<text x="555.6" y="720.0" font-size="23.5" fill="#fff" text-anchor="middle" font-family="Liberation Sans">3</text>
<circle cx="545.2" cy="711.5" r="24" fill="#8ea2f3" fill-opacity=".45"/>
<circle cx="545.2" cy="711.5" r="18" fill="#6480ee"/>
<text x="545.2" y="720.0" font-size="23.5" fill="#fff" text-anchor="middle" font-family="Liberation Sans">4</text>
<circle cx="624.5" cy="730.3" r="24" fill="#8ea2f3" fill-opacity=".45"/>
<circle cx="624.5" cy="730.3" r="18" fill="#6480ee"/>
<text x="624.5" y="738.8" font-size="23.5" fill="#fff" text-anchor="middle" font-family="Liberation Sans">1</text>
<circle cx="660.0" cy="755.4" r="34" fill="#8ea2f3" fill-opacity=".45"/>
<circle cx="660.0" cy="755.4" r="26" fill="#6480ee"/>
<path d="M660.0 743.4 l-11 10 h4 v10 h14 v-10 h4 z" fill="none" stroke="#fff" stroke-width="3" stroke-linejoin="round"/>
<circle cx="215.8" cy="87.6" r="20" fill="#000" fill-opacity=".12" filter="url(#sh)"/>
<circle cx="215.8" cy="85.6" r="18" fill="#ef8fba"/>
<circle cx="215.8" cy="85.6" r="13" fill="#d81b72"/>
<circle cx="145.3" cy="251.8" r="20" fill="#000" fill-opacity=".12" filter="url(#sh)"/>
<circle cx="145.3" cy="249.8" r="18" fill="#ef8fba"/>
<circle cx="145.3" cy="249.8" r="13" fill="#d81b72"/>
<circle cx="106.3" cy="435.1" r="20" fill="#000" fill-opacity=".12" filter="url(#sh)"/>
<circle cx="106.3" cy="433.1" r="18" fill="#ef8fba"/>
<circle cx="106.3" cy="433.1" r="13" fill="#d81b72"/>
<circle cx="473.7" cy="307.4" r="20" fill="#000" fill-opacity=".12" filter="url(#sh)"/>
<circle cx="473.7" cy="305.4" r="18" fill="#ef8fba"/>
<circle cx="473.7" cy="305.4" r="13" fill="#d81b72"/>
<circle cx="689.4" cy="307.4" r="20" fill="#000" fill-opacity=".12" filter="url(#sh)"/>
<circle cx="689.4" cy="305.4" r="18" fill="#ef8fba"/>
<circle cx="689.4" cy="305.4" r="13" fill="#d81b72"/>
<circle cx="628.8" cy="414.4" r="20" fill="#000" fill-opacity=".12" filter="url(#sh)"/>
<circle cx="628.8" cy="412.4" r="18" fill="#ef8fba"/>
<circle cx="628.8" cy="412.4" r="13" fill="#d81b72"/>
<circle cx="769.9" cy="187.1" r="20" fill="#000" fill-opacity=".12" filter="url(#sh)"/>
<circle cx="769.9" cy="185.1" r="18" fill="#ef8fba"/>
<circle cx="769.9" cy="185.1" r="13" fill="#d81b72"/>
<circle cx="1256.7" cy="86.7" r="20" fill="#000" fill-opacity=".12" filter="url(#sh)"/>
<circle cx="1256.7" cy="84.7" r="18" fill="#ef8fba"/>
<circle cx="1256.7" cy="84.7" r="13" fill="#d81b72"/>
<circle cx="968.1" cy="465.0" r="20" fill="#000" fill-opacity=".12" filter="url(#sh)"/>
<circle cx="968.1" cy="463.0" r="18" fill="#ef8fba"/>
<circle cx="968.1" cy="463.0" r="13" fill="#d81b72"/>
<circle cx="1414.3" cy="601.8" r="20" fill="#000" fill-opacity=".12" filter="url(#sh)"/>
<circle cx="1414.3" cy="599.8" r="18" fill="#ef8fba"/>
<circle cx="1414.3" cy="599.8" r="13" fill="#d81b72"/>
<circle cx="1119.9" cy="732.9" r="20" fill="#000" fill-opacity=".12" filter="url(#sh)"/>
<circle cx="1119.9" cy="730.9" r="18" fill="#ef8fba"/>
<circle cx="1119.9" cy="730.9" r="13" fill="#d81b72"/>
<circle cx="1294.0" cy="752.8" r="20" fill="#000" fill-opacity=".12" filter="url(#sh)"/>
<circle cx="1294.0" cy="750.8" r="18" fill="#ef8fba"/>
<circle cx="1294.0" cy="750.8" r="13" fill="#d81b72"/>
<circle cx="1275.8" cy="860.6" r="20" fill="#000" fill-opacity=".12" filter="url(#sh)"/>
<circle cx="1275.8" cy="858.6" r="18" fill="#ef8fba"/>
<circle cx="1275.8" cy="858.6" r="13" fill="#d81b72"/>
<circle cx="300.4" cy="751.1" r="20" fill="#000" fill-opacity=".12" filter="url(#sh)"/>
<circle cx="300.4" cy="749.1" r="18" fill="#ef8fba"/>
<circle cx="300.4" cy="749.1" r="13" fill="#d81b72"/>
<circle cx="126.2" cy="839.0" r="20" fill="#000" fill-opacity=".12" filter="url(#sh)"/>
<circle cx="126.2" cy="837.0" r="18" fill="#ef8fba"/>
<circle cx="126.2" cy="837.0" r="13" fill="#d81b72"/>
<circle cx="453.8" cy="939.4" r="20" fill="#000" fill-opacity=".12" filter="url(#sh)"/>
<circle cx="453.8" cy="937.4" r="18" fill="#ef8fba"/>
<circle cx="453.8" cy="937.4" r="13" fill="#d81b72"/>
<circle cx="881.8" cy="979.2" r="20" fill="#000" fill-opacity=".12" filter="url(#sh)"/>
<circle cx="881.8" cy="977.2" r="18" fill="#ef8fba"/>
<circle cx="881.8" cy="977.2" r="13" fill="#d81b72"/>
<circle cx="1197.8" cy="1073.8" r="20" fill="#000" fill-opacity=".12" filter="url(#sh)"/>
<circle cx="1197.8" cy="1071.8" r="18" fill="#ef8fba"/>
<circle cx="1197.8" cy="1071.8" r="13" fill="#d81b72"/>
<circle cx="550.1" cy="1174.9" r="20" fill="#000" fill-opacity=".12" filter="url(#sh)"/>
<circle cx="550.1" cy="1172.9" r="18" fill="#ef8fba"/>
<circle cx="550.1" cy="1172.9" r="13" fill="#d81b72"/>
<circle cx="1121.5" cy="1174.9" r="20" fill="#000" fill-opacity=".12" filter="url(#sh)"/>
<circle cx="1121.5" cy="1172.9" r="18" fill="#ef8fba"/>
<circle cx="1121.5" cy="1172.9" r="13" fill="#d81b72"/>
<circle cx="1495.6" cy="1193.2" r="20" fill="#000" fill-opacity=".12" filter="url(#sh)"/>
<circle cx="1495.6" cy="1191.2" r="18" fill="#ef8fba"/>
<circle cx="1495.6" cy="1191.2" r="13" fill="#d81b72"/>
<circle cx="424.8" cy="1312.6" r="20" fill="#000" fill-opacity=".12" filter="url(#sh)"/>
<circle cx="424.8" cy="1310.6" r="18" fill="#ef8fba"/>
<circle cx="424.8" cy="1310.6" r="13" fill="#d81b72"/>
<text x="725.9" y="1354.3" font-size="24" text-anchor="middle" font-family="Liberation Sans"><tspan fill="#4285f4">G</tspan><tspan fill="#ea4335">o</tspan><tspan fill="#fbbc05">o</tspan><tspan fill="#4285f4">g</tspan><tspan fill="#34a853">l</tspan><tspan fill="#ea4335">e</tspan></text>
</svg>
  </div>

  <!-- panels -->
  <div class="a" style="left:1730px;top:1375px;width:2085px;height:126px;border-radius:16px;background:#f8f8fa"></div>
  <div class="t" style="left:1763px;top:1415px;font-size:47px;font-weight:bold;letter-spacing:-0.2px;color:#3b4563">Assigned Bag/Shipments (30)</div>
  <svg class="a" style="left:3736px;top:1424px" width="48" height="28"><path d="M4 4L24 24L44 4" fill="none" stroke="#3b4563" stroke-width="3"/></svg>
  <div class="a" style="left:1730px;top:1550px;width:2085px;height:1195px;border-radius:16px;background:#f8f8fa"></div>
  <div class="t" style="left:1763px;top:1597px;font-size:47px;font-weight:bold;letter-spacing:-0.2px;color:#3b4563">Unassigned Bag/Shipments (20)</div>
  <div class="a" style="left:3534px;top:1582px;width:166px;height:75px;border-radius:12px;background:#5b82f5"></div>
  <div class="t m" style="left:3586px;top:1607px;font-size:28px;color:#fff">Save</div>
  <svg class="a" style="left:3736px;top:1604px" width="48" height="28"><path d="M4 24L24 4L44 24" fill="none" stroke="#3b4563" stroke-width="3"/></svg>

  <!-- table -->
  <div class="a" style="left:1764px;top:1707px;width:2018px;height:1005px;border:2px solid #e0e3eb;border-radius:12px;background:#f8f8fa;overflow:hidden;box-shadow:0 3px 4px rgba(40,50,90,.08)"></div>
  <div class="t m" style="left:1795px;top:1733px;font-size:24px;letter-spacing:1.03px;color:#3b4563">BAG/SHIPMENT ID</div>
  <div class="t m" style="left:2224px;top:1733px;font-size:24px;letter-spacing:0.44px;color:#3b4563">NO. OF SHIPMENTS</div>
  <div class="t m" style="left:2654px;top:1733px;font-size:24px;letter-spacing:0.38px;color:#3b4563">PICKUP ADDRESS</div>
  <div class="t m" style="left:3228px;top:1733px;font-size:24px;letter-spacing:-0.1px;color:#3b4563">DROP ADDRESS</div>
  <div id="rows" class="a" style="left:0;top:0;width:3920px;height:2693px;overflow:hidden">
  <div class="row" style="top:1777px"><div class="radio"></div><div class="rid">1009120615</div><div class="cnt">12</div><div class="pa">1300 Van Ness Ave, San Francisco, CA<br>94109</div></div>
  <div class="row" style="top:1921px"><div class="radio"></div><div class="rid">5775109234</div><div class="cnt">2</div><div class="pa">1765 California St, San Francisco, CA<br>94109</div><div class="da">1640 Haight St, San Francisco, CA</div><svg class="plus" viewBox="0 0 31 31"><path d="M15.5 1V30M1 15.5H30" stroke="#5b7ff0" stroke-width="2.6"/></svg><div class="asg">Assign</div></div>
  <div class="row" style="top:2065px"><div class="radio"></div><div class="rid">6110998178</div><div class="cnt">30</div><div class="pa">1 Telegraph Hill Blvd, San Francisco, CA<br>94133</div><div class="da">174, 1 4, Ks Garden, Lalbagh</div><svg class="plus" viewBox="0 0 31 31"><path d="M15.5 1V30M1 15.5H30" stroke="#5b7ff0" stroke-width="2.6"/></svg><div class="asg">Assign</div></div>
  <div class="row" style="top:2209px"><div class="radio"></div><div class="rid">2295100510</div><div class="cnt">1</div><div class="pa" style="top:34px;line-height:40px">3854 Geary Blvd, San Francisco, CA<br>94118</div><div class="da">450 10th St, San Francisco, CA</div><svg class="plus" viewBox="0 0 31 31"><path d="M15.5 1V30M1 15.5H30" stroke="#5b7ff0" stroke-width="2.6"/></svg><div class="asg">Assign</div></div>
  <div class="row" style="top:2353px"><div class="radio"></div><div class="rid">1909667190</div><div class="cnt">20</div><div class="pa">1750 Fulton St, San Francisco, CA<br>94117</div><div class="da" style="top:25px;line-height:47px;height:100px">1735 Noriega St, San Francisco, CA<br>94122</div><svg class="plus" viewBox="0 0 31 31"><path d="M15.5 1V30M1 15.5H30" stroke="#5b7ff0" stroke-width="2.6"/></svg><div class="asg">Assign</div></div>
  <div class="row" style="top:2497px"><div class="radio"></div><div class="rid">3009171260</div><div class="cnt">1</div><div class="pa">2350 Noriega St, San Francisco, CA<br>94122</div><div class="da">1650 Balboa St, San Francisco, CA</div><svg class="plus" viewBox="0 0 31 31"><path d="M15.5 1V30M1 15.5H30" stroke="#5b7ff0" stroke-width="2.6"/></svg><div class="asg">Assign</div></div>
  <div class="row" style="top:2641px"><div class="pa" style="top:28px">Wind Tunnel Rd, K R Garden</div></div>
  </div>
  <div class="a" style="left:1766px;top:2693px;width:2014px;height:18px;background:#f8f8fa;border-radius:0 0 10px 10px"></div>
  <div class="a" style="left:1834px;top:2698px;width:124px;height:11px;border-radius:6px;background:#dde0e9"></div>
  <div class="a" style="left:3760px;top:1777px;width:20px;height:916px;background:#f8f8fa"></div>
  <div class="a" style="left:3764px;top:1850px;width:12px;height:124px;border-radius:6px;background:#e4e6ec"></div>

  <!-- tooltip + undo -->
  <div class="a" style="left:3194px;top:1794px;width:341px;height:112px;border-radius:8px;background:#27419c"></div>
  <svg class="a" style="left:3534px;top:1836px" width="16" height="28"><path d="M0 0L14 14L0 28Z" fill="#27419c"/></svg>
  <div class="t" style="left:3243px;top:1837px;font-size:30px;font-weight:bold;color:#fff">Assign Shipment</div>
  <div class="a" style="left:3554px;top:1789px;width:184px;height:122px;border:4px solid #27419c;border-radius:14px;background:#fff"></div>
  <div class="t" style="left:3617px;top:1839px;font-size:27px;color:#f5a623">Undo</div>
  <svg class="a" style="left:3666px;top:1856px" width="34" height="50"><path d="M3 2V38L11 30L17 45L23 42L17 28H28Z" fill="#fff" stroke="#111" stroke-width="2.4" stroke-linejoin="round"/></svg>
</div>
</body></html>
